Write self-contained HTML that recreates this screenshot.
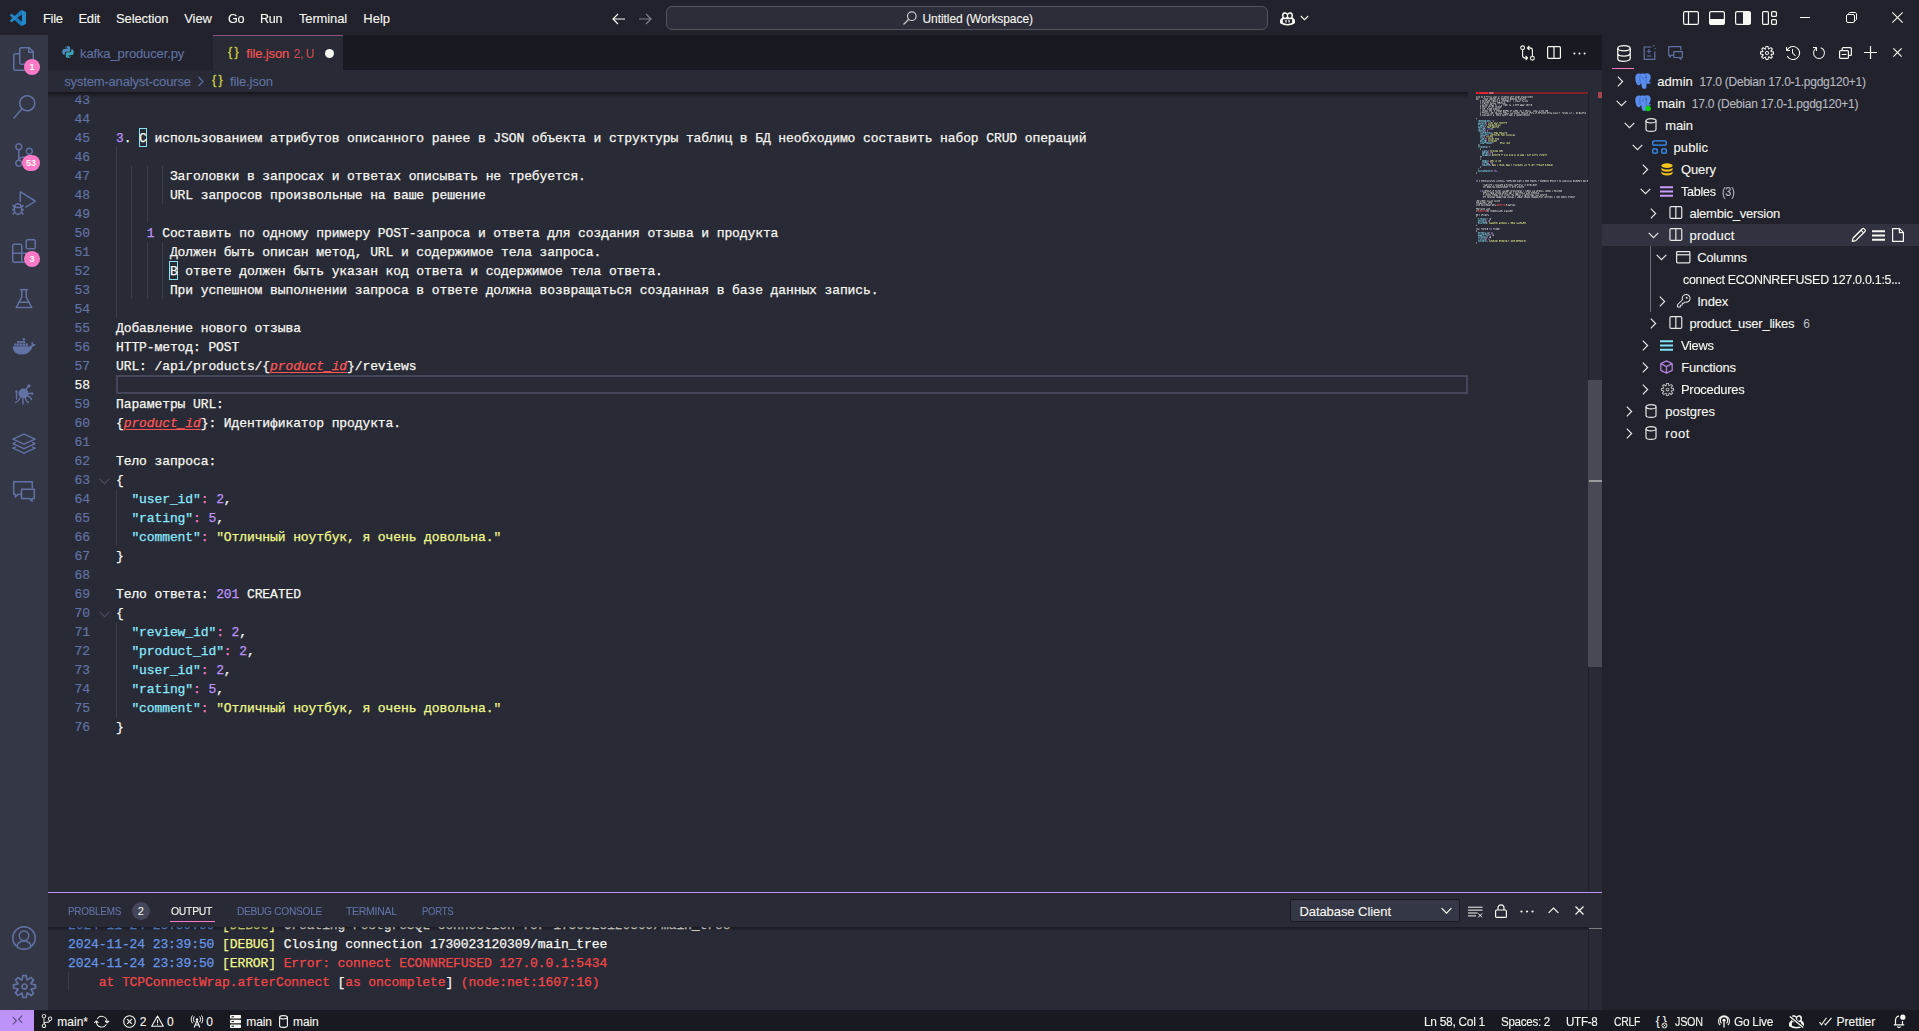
<!DOCTYPE html>
<html lang="en"><head><meta charset="utf-8"><title>file.json - Untitled (Workspace) - Visual Studio Code</title>
<style>
html,body{margin:0;padding:0;}
body{width:1919px;height:1031px;overflow:hidden;background:#282a36;position:relative;font-family:"Liberation Sans",sans-serif;font-size:13px;color:#f8f8f2;}
*{box-sizing:border-box;}
.abs{position:absolute;}
svg{display:block;position:absolute;overflow:visible;}
.t{position:absolute;white-space:pre;line-height:1;-webkit-text-stroke:0.1px;}
/* title bar */
#titlebar{position:absolute;left:0;top:0;width:1919px;height:35px;background:#21222c;}
#titlebar .m{position:absolute;top:0;height:35px;line-height:35px;font-size:13px;color:#f8f8f2;white-space:pre;}
#cmd{position:absolute;left:666px;top:6px;width:602px;height:24px;border:1px solid #54555d;border-radius:6px;background:#2c2d38;}
/* activity bar */
#activity{position:absolute;left:0;top:35px;width:48px;height:975px;background:#343746;}
.badge{position:absolute;width:16px;height:16px;border-radius:8px;background:#ff79c6;color:#f8f8f2;font-size:9px;font-weight:bold;text-align:center;line-height:16px;}
/* tabs */
#tabs{position:absolute;left:48px;top:35px;width:1554px;height:35px;background:#191a21;}
#crumbs{position:absolute;left:48px;top:70px;width:1554px;height:22px;background:#282a36;color:#6272a4;font-size:13px;}
/* editor */
#editor{position:absolute;left:48px;top:92px;width:1554px;height:800px;background:#282a36;overflow:hidden;}
.mono{font-family:"Liberation Mono","DejaVu Sans Mono",monospace;}
.ln{-webkit-text-stroke:0.2px;position:absolute;left:0;width:42px;text-align:right;height:19px;line-height:19px;color:#6272a4;font-size:13px;letter-spacing:-0.1px;font-family:"Liberation Mono",monospace;}
.cl{-webkit-text-stroke:0.25px;position:absolute;left:68px;height:19px;line-height:19px;white-space:pre;color:#f8f8f2;font-size:13px;letter-spacing:-0.1px;font-family:"Liberation Mono",monospace;}
.k{color:#8be9fd;} .s{color:#f1fa8c;} .n{color:#bd93f9;} .p{color:#ff79c6;} .q{color:#e9f284;} .kq{color:#8be9fd;}
.err{color:#ff5555;font-style:italic;text-decoration:underline;text-decoration-color:#ff5555;text-underline-offset:2px;text-decoration-thickness:1px;}
.guide{position:absolute;width:1px;background:#3b3d4d;}
/* panel */
#panel{position:absolute;left:48px;top:892px;width:1554px;height:118px;background:#282a36;border-top:1px solid #bd93f9;overflow:hidden;}
.pt{position:absolute;top:0;height:38px;line-height:38px;font-size:11px;color:#6272a4;white-space:pre;}
.ol{-webkit-text-stroke:0.25px;position:absolute;left:20px;height:19px;line-height:19px;white-space:pre;font-size:13px;letter-spacing:-0.1px;font-family:"Liberation Mono",monospace;color:#f8f8f2;}
/* sidebar */
#sidebar{position:absolute;left:1602px;top:35px;width:317px;height:975px;background:#21222c;}
.row{position:absolute;left:0;width:317px;height:22px;line-height:22px;font-size:13px;color:#f8f8f2;white-space:pre;}
.row .lbl{position:absolute;top:0;}
.row .desc{color:#b0b1b8;font-size:12px;}
/* status */
#status{position:absolute;left:0;top:1010px;width:1919px;height:22px;background:#191a21;color:#f8f8f2;font-size:12px;}
#status .s{position:absolute;top:0;height:22px;line-height:22px;white-space:pre;color:#f8f8f2;}

</style></head>
<body>
<div id="titlebar">
<svg style="left:10px;top:10px;" width="16" height="16" viewBox="0 0 100 100"><path fill="#2489ca" d="M96.5 10.8L75.9.9c-2.4-1.2-5.2-.7-7.1 1.2L29.4 38 12.2 25c-1.6-1.2-3.800-1.100-5.300.2L1.400 30.200c-1.800 1.700-1.800 4.500 0 6.200L16.300 50 1.400 63.600c-1.800 1.700-1.800 4.500 0 6.200l5.500 5c1.500 1.300 3.700 1.400 5.300.2L29.400 62l39.400 35.900c1.900 1.900 4.700 2.400 7.100 1.200l20.600-9.900c2.100-1 3.500-3.200 3.500-5.600V16.400c0-2.400-1.400-4.600-3.500-5.600zM75 72.700L45.100 50 75 27.300z"/><path fill="#1070b3" d="M75 .9c-2.400-1.200-5.200-.7-7.100 1.200L29.400 38l15.700 12L75 27.300v45.400L45.100 50 29.400 62l38.500 35.900c1.900 1.900 4.700 2.400 7.100 1.200z" opacity=".55"/></svg>
<span class="t" style="left:42.9px;top:9px;font-size:13px;line-height:19px;color:#f8f8f2;letter-spacing:-0.282px;">File</span>
<span class="t" style="left:78.4px;top:9px;font-size:13px;line-height:19px;color:#f8f8f2;letter-spacing:-0.200px;">Edit</span>
<span class="t" style="left:116px;top:9px;font-size:13px;line-height:19px;color:#f8f8f2;letter-spacing:-0.122px;">Selection</span>
<span class="t" style="left:184.3px;top:9px;font-size:13px;line-height:19px;color:#f8f8f2;letter-spacing:-0.114px;">View</span>
<span class="t" style="left:227.6px;top:9px;font-size:13px;line-height:19px;color:#f8f8f2;letter-spacing:-0.300px;transform:scaleX(0.9799);transform-origin:0 50%;">Go</span>
<span class="t" style="left:260.4px;top:9px;font-size:13px;line-height:19px;color:#f8f8f2;letter-spacing:-0.300px;transform:scaleX(0.9635);transform-origin:0 50%;">Run</span>
<span class="t" style="left:299px;top:9px;font-size:13px;line-height:19px;color:#f8f8f2;letter-spacing:-0.146px;">Terminal</span>
<span class="t" style="left:363.3px;top:9px;font-size:13px;line-height:19px;color:#f8f8f2;letter-spacing:-0.012px;">Help</span>
<svg style="left:611px;top:11px;" width="16" height="16" viewBox="0 0 16 16"><path d="M14 8H2.500M7 3L2 8l5 5" fill="none" stroke="#f8f8f2" stroke-width="1.200"/></svg>
<svg style="left:637px;top:11px;" width="16" height="16" viewBox="0 0 16 16"><path d="M2 8h11.500M9 3l5 5-5 5" fill="none" stroke="#7f808a" stroke-width="1.200"/></svg>
<div id="cmd"></div>
<svg style="left:902px;top:10px;" width="16" height="16" viewBox="0 0 16 16"><circle cx="9.800" cy="6.200" r="4.300" fill="none" stroke="#c8c8c8" stroke-width="1.200"/><path d="M6.800 9.200L1.500 14.500" stroke="#c8c8c8" stroke-width="1.300"/></svg>
<span class="t" style="left:922.5px;top:10px;font-size:12px;line-height:18px;color:#f8f8f2;letter-spacing:-0.069px;">Untitled (Workspace)</span>
<svg style="left:1280px;top:12px;" width="15" height="13.6" viewBox="0 0 15 13.600"><path fill="#f8f8f2" fill-rule="evenodd" d="M7.500 1.600C6.600.500 5.300 0 4.300.200 2.800.400 2 1.600 2 3.200c0 .8.100 1.500.4 2L.6 7.200C.2 7.700 0 8.200 0 8.800v1.600c0 .5.200.9.600 1.200 1.800 1.300 4.300 2 6.900 2s5.100-.7 6.900-2c.4-.3.600-.7.600-1.200V8.800c0-.6-.2-1.100-.6-1.600L12.600 5.200c.3-.5.400-1.200.4-2 0-1.600-.8-2.800-2.300-3-1-.2-2.300.3-3.200 1.400zM5.200 1.700c-1 0-1.700.8-1.700 2s.7 2 1.700 2 1.700-.8 1.700-2-.7-2-1.700-2zM9.800 1.700c-1 0-1.700.8-1.700 2s.7 2 1.700 2 1.700-.8 1.700-2-.7-2-1.700-2zM2.900 7.300h9.200v3.500c-1.300.7-2.900 1.100-4.600 1.100s-3.300-.4-4.600-1.100z"/><rect x="5.300" y="8" width="1.300" height="2.400" rx=".5" fill="#f8f8f2"/><rect x="8.400" y="8" width="1.300" height="2.400" rx=".5" fill="#f8f8f2"/></svg>
<svg style="left:1300px;top:14px;" width="9" height="8" viewBox="0 0 9 8"><path d="M.8 2l3.700 3.700L8.200 2" fill="none" stroke="#f8f8f2" stroke-width="1.100"/></svg>
<svg style="left:1683px;top:11px;" width="16" height="14" viewBox="0 0 16 14"><rect x=".6" y=".6" width="14.800" height="12.800" rx="1.500" fill="none" stroke="#f8f8f2" stroke-width="1.200"/><path d="M5.500 .6v12.800" stroke="#f8f8f2" stroke-width="1.200"/></svg>
<svg style="left:1709px;top:11px;" width="16" height="14" viewBox="0 0 16 14"><rect x=".6" y=".6" width="14.800" height="12.800" rx="1.500" fill="none" stroke="#f8f8f2" stroke-width="1.200"/><rect x="1" y="8" width="14" height="5.500" fill="#f8f8f2"/></svg>
<svg style="left:1735px;top:11px;" width="16" height="14" viewBox="0 0 16 14"><rect x=".6" y=".6" width="14.800" height="12.800" rx="1.500" fill="none" stroke="#f8f8f2" stroke-width="1.200"/><rect x="8" y="1" width="7.500" height="12" fill="#f8f8f2"/></svg>
<svg style="left:1762px;top:11px;" width="15" height="14" viewBox="0 0 15 14"><rect x=".6" y=".6" width="5.800" height="12.800" rx="1" fill="none" stroke="#f8f8f2" stroke-width="1.200"/><rect x="9.600" y=".6" width="4.800" height="4.800" rx="1" fill="none" stroke="#f8f8f2" stroke-width="1.200"/><rect x="9.600" y="8.600" width="4.800" height="4.800" rx="1" fill="none" stroke="#f8f8f2" stroke-width="1.200"/></svg>
<div class="abs" style="left:1800px;top:17px;width:10px;height:1px;background:#f8f8f2"></div>
<svg style="left:1846px;top:12px;" width="11" height="11" viewBox="0 0 11 11"><rect x=".5" y="2.500" width="8" height="8" rx="1.500" fill="none" stroke="#f8f8f2" stroke-width="1"/><path d="M2.500 2.500V2c0-.8.700-1.500 1.500-1.500h5c.8 0 1.500.7 1.500 1.500v5c0 .8-.7 1.500-1.500 1.500h-.5" fill="none" stroke="#f8f8f2" stroke-width="1"/></svg>
<svg style="left:1892px;top:12px;" width="11" height="11" viewBox="0 0 11 11"><path d="M.3.3l10.400 10.400M10.700.3L.3 10.700" stroke="#f8f8f2" stroke-width="1.100"/></svg>
</div>
<div id="activity">
<svg style="left:12px;top:12px;" width="24" height="24" viewBox="0 0 24 24"><path fill="#6272a4" d="M17.500 0h-9L7 1.500V6H2.500L1 7.500v15.070L2.500 24h12.070L16 22.570V18h4.700l1.300-1.430V4.500L17.500 0zm0 2.120l2.380 2.380H17.500V2.120zm-3 20.380h-12v-15H7v9.070L8.500 18h6v4.500zm6-6h-12v-15H16V6h4.500v10.500z"/></svg>
<svg style="left:12px;top:60px;" width="24" height="24" viewBox="0 0 24 24"><path fill="#6272a4" d="M15.250 0a8.250 8.250 0 0 0-6.180 13.720L1 22.880l1.120 1 8.050-9.120A8.251 8.251 0 1 0 15.250.01V0zm0 15a6.750 6.750 0 1 1 0-13.500 6.750 6.750 0 0 1 0 13.500z"/></svg>
<svg style="left:12px;top:108px;" width="24" height="24" viewBox="0 0 24 24"><path fill="#6272a4" d="M21.007 8.222A3.738 3.738 0 0 0 15.045 5.200a3.737 3.737 0 0 0 1.156 6.583 2.988 2.988 0 0 1-2.668 1.670h-2.990a4.456 4.456 0 0 0-2.989 1.165V7.400a3.737 3.737 0 1 0-1.494 0v9.117a3.776 3.776 0 1 0 1.816.099 2.990 2.990 0 0 1 2.668-1.667h2.990a4.484 4.484 0 0 0 4.223-3.039 3.736 3.736 0 0 0 3.250-3.687zM4.565 3.738a2.242 2.242 0 1 1 4.484 0 2.242 2.242 0 0 1-4.484 0zm4.484 16.441a2.242 2.242 0 1 1-4.484 0 2.242 2.242 0 0 1 4.484 0zm8.221-9.715a2.242 2.242 0 1 1 0-4.485 2.242 2.242 0 0 1 0 4.485z"/></svg>
<svg style="left:12px;top:156px;" width="24" height="24" viewBox="0 0 24 24"><path fill="#6272a4" d="M10.940 13.500l-1.320 1.320a3.730 3.730 0 0 0-7.240 0L1.060 13.500 0 14.560l1.720 1.720-.22.22V18H0v1.500h1.500v.080c.077.489.214.966.410 1.420L0 22.940 1.060 24l1.650-1.650A4.308 4.308 0 0 0 6 24a4.310 4.310 0 0 0 3.290-1.650L10.940 24 12 22.940 10.090 21c.198-.464.336-.951.410-1.450v-.1H12V18h-1.500v-1.500l-.22-.22L12 14.560l-1.060-1.060zM6 13.500a2.250 2.250 0 0 1 2.250 2.250h-4.500A2.250 2.250 0 0 1 6 13.500zm3 6a3.330 3.330 0 0 1-3 3 3.330 3.330 0 0 1-3-3v-2.250h6v2.250zm14.760-9.900v1.260L13.500 17.370V15.600l8.500-5.370L9 2v9.460a5.070 5.070 0 0 0-1.500-.72V.630L8.640 0l15.120 9.600z"/></svg>
<svg style="left:12px;top:204px;" width="24" height="24" viewBox="0 0 24 24"><path fill="#6272a4" d="M13.500 1.500L15 0h7.500L24 1.500V9l-1.500 1.500H15L13.500 9V1.500zm1.500 0V9h7.500V1.500H15zM0 15V6l1.500-1.500H9L10.500 6v7.500H18l1.500 1.500v7.500L18 24H1.500L0 22.500V15zm9-1.500V6H1.500v7.500H9zM9 15H1.500v7.500H9V15zm1.500 7.500H18V15h-7.500v7.500z"/></svg>
<svg style="left:12px;top:252px;" width="24" height="24" viewBox="0 0 24 24"><path fill="none" stroke="#6272a4" stroke-width="1.500" stroke-linejoin="round" d="M8 2.800h8M9.800 2.800v7.200L4.200 20.600h15.600L14.200 10V2.800M7 15.200h10"/></svg>
<svg style="left:12px;top:300px;" width="24" height="24" viewBox="0 0 24 24"><path fill="#6272a4" d="M.6 11.200h17.200c.9-.1 1.500-.6 1.900-1.600-.5-1-.4-2 .3-2.900.9.600 1.300 1.400 1.300 2.400 1-.3 1.900-.1 2.500.500-.6 1.200-1.700 1.800-3.200 1.800C18.800 16.500 15.200 19.500 9.600 19.500 4.200 19.500.9 16.700.6 11.200z"/><path fill="#6272a4" d="M2.300 8.500h2.400v2.200H2.300zM5.100 8.500h2.400v2.200H5.100zM7.900 8.500h2.400v2.200H7.900zM10.700 8.500h2.400v2.200h-2.400zM13.500 8.500h2.400v2.200h-2.400zM5.100 5.900h2.400v2.200H5.100zM7.900 5.900h2.400v2.200H7.900zM10.700 5.900h2.400v2.200h-2.400zM10.700 3.300h2.400v2.200h-2.400z"/></svg>
<svg style="left:12px;top:348px;" width="24" height="24" viewBox="0 0 24 24"><circle cx="11.500" cy="10.500" r="5" fill="#6272a4"/><path fill="none" stroke="#6272a4" stroke-width="1.400" stroke-linecap="round" d="M14 6.500l2.500-3.500M4.500 9v7M8 15c-1 2-2 4-4.500 4.500M11 16v5M13.500 15.500c.5 2 1.500 3.500 3 4M16 13c1.500.5 3 1.500 3.500 3.500M15.500 10.500h3"/><circle cx="17" cy="2.800" r="1.600" fill="#6272a4"/><circle cx="4.500" cy="8.500" r="1.300" fill="#6272a4"/><circle cx="20" cy="10.500" r="1.300" fill="#6272a4"/></svg>
<svg style="left:12px;top:396px;" width="24" height="24" viewBox="0 0 24 24"><path fill="none" stroke="#6272a4" stroke-width="1.400" stroke-linejoin="round" d="M12 3.200L.9 8.200 12 13.200l11.100-5zM3.800 11.400L.9 12.700 12 17.700l11.100-5-2.900-1.300M3.800 15.900L.9 17.200 12 22.200l11.100-5-2.900-1.300"/></svg>
<svg style="left:12px;top:444px;" width="24" height="24" viewBox="0 0 24 24"><path fill="none" stroke="#6272a4" stroke-width="1.500" stroke-linejoin="round" d="M9.500 15.200H6.200L3.400 18v-2.800H1.700V2.800h18.600v6.400M9.500 10.200h12.800v9.200h-2.200v2.800l-2.800-2.800H9.500z"/></svg>
<div class="badge" style="left:24px;top:24px;">1</div>
<div class="badge" style="left:22px;top:120px;width:18px;">53</div>
<div class="badge" style="left:24px;top:216px;">3</div>
<svg style="left:12px;top:891px;" width="24" height="24" viewBox="0 0 24 24"><circle cx="12" cy="12" r="11.200" fill="none" stroke="#6272a4" stroke-width="1.500"/><circle cx="12" cy="9.700" r="4.700" fill="none" stroke="#6272a4" stroke-width="1.500"/><path d="M4.800 20.300c1-3.600 3.900-5.300 7.200-5.300s6.200 1.700 7.200 5.300" fill="none" stroke="#6272a4" stroke-width="1.500"/></svg>
<svg style="left:10.5px;top:937.5px;" width="27" height="27" viewBox="0 0 16 16"><path fill="#6272a4" d="M9.100 4.400L8.600 2H7.400l-.5 2.400-.7.300-2-1.300-.9.800 1.300 2-.2.700-2.400.5v1.200l2.400.5.300.8-1.300 2 .8.800 2-1.300.8.300.4 2.300h1.200l.5-2.400.8-.3 2 1.300.8-.8-1.300-2 .3-.8 2.300-.4V7.400l-2.400-.5-.3-.8 1.300-2-.8-.8-2 1.300-.7-.2zM9.400 1l.5 2.400L12 2.100l2 2-1.400 2.100 2.400.4v2.800l-2.400.5L14 12l-2 2-2.100-1.400-.5 2.400H6.600l-.5-2.400L4 13.900l-2-2 1.400-2.100L1 9.400V6.600l2.400-.5L2.100 4l2-2 2.100 1.400.4-2.400h2.800zm.6 7c0 1.100-.9 2-2 2s-2-.9-2-2 .9-2 2-2 2 .9 2 2zM8 9c.6 0 1-.4 1-1s-.4-1-1-1-1 .4-1 1 .4 1 1 1z"/></svg>
</div>
<div id="tabs">
<div class="abs" style="left:0;top:0;width:165px;height:35px;background:#21222c"></div>
<div class="abs" style="left:165px;top:0;width:130px;height:35px;background:#282a36;border-top:1px solid #8f4f80"></div>
<svg style="left:14px;top:11px;" width="12" height="12" viewBox="0 0 12 12"><path fill="#4b8bbe" d="M5.900.2C3.300.2 3.500 1.300 3.500 1.300v1.200h2.500v.4H2.100S.3 2.700.3 5.800s1.500 3 1.500 3h1V7.300s0-1.500 1.500-1.500h2.500s1.400 0 1.400-1.400V1.800S8.400.2 5.900.2z"/><path fill="#3a9fb3" d="M6.100 11.800c2.600 0 2.400-1.100 2.400-1.100V9.500H6v-.4h3.900s1.800.2 1.800-2.900-1.500-3-1.500-3h-1v1.500s0 1.500-1.500 1.500H5.200s-1.400 0-1.400 1.400v2.600s-.2 1.600 2.300 1.600z"/><circle cx="4.600" cy="1.600" r=".5" fill="#21222c"/><circle cx="7.400" cy="10.400" r=".5" fill="#21222c"/></svg>
<span class="t" style="left:32px;top:9px;font-size:13px;line-height:19px;color:#6272a4;letter-spacing:-0.121px;">kafka_producer.py</span>
<span class="t" style="left:180px;top:8.05px;font-size:12.5px;line-height:18.5px;color:#cbcb41;letter-spacing:2.450px;-webkit-text-stroke:0.35px #cbcb41;">{}</span>
<span class="t" style="left:198.3px;top:9px;font-size:13px;line-height:19px;color:#ff5555;letter-spacing:-0.147px;">file.json</span>
<span class="t" style="left:246.2px;top:9.5px;font-size:12px;line-height:18px;color:#d44a50;letter-spacing:-0.300px;transform:scaleX(0.9712);transform-origin:0 50%;">2, U</span>
<div class="abs" style="left:276.500px;top:13.500px;width:9px;height:9px;border-radius:5px;background:#f8f8f2"></div>
<svg style="left:1472px;top:10px;" width="15" height="16" viewBox="0 0 15 16"><circle cx="2.600" cy="2.800" r="1.900" fill="none" stroke="#f8f8f2" stroke-width="1.100"/><circle cx="12.400" cy="13.200" r="1.900" fill="none" stroke="#f8f8f2" stroke-width="1.100"/><path d="M2.600 4.700v5.800c0 1.600 1 2.600 2.600 2.600h2.300M5.600 11l2 2.100-2 2.100M12.400 11.300V5.500c0-1.600-1-2.600-2.600-2.600H7.500M9.400 5L7.400 2.900l2-2.100" fill="none" stroke="#f8f8f2" stroke-width="1.100"/></svg>
<svg style="left:1499px;top:11px;" width="14" height="13" viewBox="0 0 14 13"><rect x=".6" y=".6" width="12.800" height="11.800" rx="1" fill="none" stroke="#f8f8f2" stroke-width="1.200"/><path d="M7 .6v11.800" stroke="#f8f8f2" stroke-width="1.200"/></svg>
<svg style="left:1524.5px;top:16.5px;" width="13" height="3" viewBox="0 0 14 3"><circle cx="1.500" cy="1.500" r="1.100" fill="#f8f8f2"/><circle cx="7" cy="1.500" r="1.100" fill="#f8f8f2"/><circle cx="12.500" cy="1.500" r="1.100" fill="#f8f8f2"/></svg>
</div>
<div id="crumbs">
<span class="t" style="left:16.2px;top:2px;font-size:13px;line-height:19px;color:#6272a4;letter-spacing:-0.162px;">system-analyst-course</span>
<svg style="left:148.5px;top:6px;" width="8" height="11" viewBox="0 0 8 11"><path d="M1.500 1l4.500 4.500L1.500 10" fill="none" stroke="#6272a4" stroke-width="1.100"/></svg>
<span class="t" style="left:164px;top:1.05px;font-size:12.5px;line-height:18.5px;color:#cbcb41;letter-spacing:2.450px;-webkit-text-stroke:0.35px #cbcb41;">{}</span>
<span class="t" style="left:182px;top:2px;font-size:13px;line-height:19px;color:#6272a4;letter-spacing:-0.135px;">file.json</span>
</div>
<div id="editor">
<div class="abs" style="left:68px;top:283px;width:1352px;height:19px;border:2px solid #44475a;"></div>
<div class="guide" style="left:68px;top:55px;height:171px"></div>
<div class="guide" style="left:83px;top:74px;height:133px"></div>
<div class="guide" style="left:99px;top:74px;height:57px"></div>
<div class="guide" style="left:99px;top:150px;height:57px"></div>
<div class="guide" style="left:114px;top:74px;height:38px"></div>
<div class="guide" style="left:114px;top:150px;height:57px"></div>
<div class="guide" style="left:68px;top:397px;height:57px"></div>
<div class="guide" style="left:68px;top:530px;height:95px"></div>
<div class="abs" style="left:90.6px;top:36px;width:8.700px;height:19px;border:1px solid #86e3f7;"></div>
<div class="abs" style="left:121.4px;top:169px;width:8.700px;height:19px;border:1px solid #86e3f7;"></div>
<div class="ln" style="top:-1px;">43</div>
<div class="ln" style="top:18px;">44</div>
<div class="ln" style="top:37px;">45</div>
<div class="cl" style="top:37px"><span class="n">3</span>. С использованием атрибутов описанного ранее в JSON объекта и структуры таблиц в БД необходимо составить набор CRUD операций</div>
<div class="ln" style="top:56px;">46</div>
<div class="ln" style="top:75px;">47</div>
<div class="cl" style="top:75px">       Заголовки в запросах и ответах описывать не требуется.</div>
<div class="ln" style="top:94px;">48</div>
<div class="cl" style="top:94px">       URL запросов произвольные на ваше решение</div>
<div class="ln" style="top:113px;">49</div>
<div class="ln" style="top:132px;">50</div>
<div class="cl" style="top:132px">    <span class="n">1</span> Составить по одному примеру POST-запроса и ответа для создания отзыва и продукта</div>
<div class="ln" style="top:151px;">51</div>
<div class="cl" style="top:151px">       Должен быть описан метод, URL и содержимое тела запроса.</div>
<div class="ln" style="top:170px;">52</div>
<div class="cl" style="top:170px">       В ответе должен быть указан код ответа и содержимое тела ответа.</div>
<div class="ln" style="top:189px;">53</div>
<div class="cl" style="top:189px">       При успешном выполнении запроса в ответе должна возвращаться созданная в базе данных запись.</div>
<div class="ln" style="top:208px;">54</div>
<div class="ln" style="top:227px;">55</div>
<div class="cl" style="top:227px">Добавление нового отзыва</div>
<div class="ln" style="top:246px;">56</div>
<div class="cl" style="top:246px">HTTP-метод: POST</div>
<div class="ln" style="top:265px;">57</div>
<div class="cl" style="top:265px">URL: /api/products/{<span class="err">product_id</span>}/reviews</div>
<div class="ln" style="top:284px;color:#f8f8f2;">58</div>
<div class="ln" style="top:303px;">59</div>
<div class="cl" style="top:303px">Параметры URL:</div>
<div class="ln" style="top:322px;">60</div>
<div class="cl" style="top:322px">{<span class="err">product_id</span>}: Идентификатор продукта.</div>
<div class="ln" style="top:341px;">61</div>
<div class="ln" style="top:360px;">62</div>
<div class="cl" style="top:360px">Тело запроса:</div>
<div class="ln" style="top:379px;">63</div>
<div class="cl" style="top:379px">{</div>
<div class="ln" style="top:398px;">64</div>
<div class="cl" style="top:398px">  <span class="kq">&quot;</span><span class="k">user_id</span><span class="kq">&quot;</span><span class="p">:</span> <span class="n">2</span>,</div>
<div class="ln" style="top:417px;">65</div>
<div class="cl" style="top:417px">  <span class="kq">&quot;</span><span class="k">rating</span><span class="kq">&quot;</span><span class="p">:</span> <span class="n">5</span>,</div>
<div class="ln" style="top:436px;">66</div>
<div class="cl" style="top:436px">  <span class="kq">&quot;</span><span class="k">comment</span><span class="kq">&quot;</span><span class="p">:</span> <span class="q">&quot;</span><span class="s">Отличный ноутбук, я очень довольна.</span><span class="q">&quot;</span></div>
<div class="ln" style="top:455px;">67</div>
<div class="cl" style="top:455px">}</div>
<div class="ln" style="top:474px;">68</div>
<div class="ln" style="top:493px;">69</div>
<div class="cl" style="top:493px">Тело ответа: <span class="n">201</span> CREATED</div>
<div class="ln" style="top:512px;">70</div>
<div class="cl" style="top:512px">{</div>
<div class="ln" style="top:531px;">71</div>
<div class="cl" style="top:531px">  <span class="kq">&quot;</span><span class="k">review_id</span><span class="kq">&quot;</span><span class="p">:</span> <span class="n">2</span>,</div>
<div class="ln" style="top:550px;">72</div>
<div class="cl" style="top:550px">  <span class="kq">&quot;</span><span class="k">product_id</span><span class="kq">&quot;</span><span class="p">:</span> <span class="n">2</span>,</div>
<div class="ln" style="top:569px;">73</div>
<div class="cl" style="top:569px">  <span class="kq">&quot;</span><span class="k">user_id</span><span class="kq">&quot;</span><span class="p">:</span> <span class="n">2</span>,</div>
<div class="ln" style="top:588px;">74</div>
<div class="cl" style="top:588px">  <span class="kq">&quot;</span><span class="k">rating</span><span class="kq">&quot;</span><span class="p">:</span> <span class="n">5</span>,</div>
<div class="ln" style="top:607px;">75</div>
<div class="cl" style="top:607px">  <span class="kq">&quot;</span><span class="k">comment</span><span class="kq">&quot;</span><span class="p">:</span> <span class="q">&quot;</span><span class="s">Отличный ноутбук, я очень довольна.</span><span class="q">&quot;</span></div>
<div class="ln" style="top:626px;">76</div>
<div class="cl" style="top:626px">}</div>
<svg style="left:51px;top:386px;" width="11" height="7" viewBox="0 0 11 7"><path d="M.7.800l4.800 4.800L10.300.8" fill="none" stroke="#4a4d62" stroke-width="1.100"/></svg>
<svg style="left:51px;top:519px;" width="11" height="7" viewBox="0 0 11 7"><path d="M.7.800l4.800 4.800L10.300.8" fill="none" stroke="#4a4d62" stroke-width="1.100"/></svg>
<div class="abs" style="left:0;top:0;width:1420px;height:6px;background:linear-gradient(#15161c,rgba(21,22,28,0))"></div>
<svg style="left:1428px;top:0px" width="112" height="154" viewBox="0 0 112 154"><defs><filter id="mmf" x="0" y="0" width="100%" height="100%" color-interpolation-filters="sRGB"><feTurbulence type="fractalNoise" baseFrequency="0.85 0.6" numOctaves="2" seed="7" result="n"/><feColorMatrix in="n" type="matrix" values="0 0 0 0 0 0 0 0 0 0 0 0 0 0 0 1.7 0 0 0 -0.3" result="a"/><feComposite in="SourceGraphic" in2="a" operator="in"/></filter></defs><rect x="0" y="0" width="112" height="2" fill="#80212a"/><rect x="0" y="0" width="2" height="2" fill="#ff1c1c"/><rect x="3" y="0" width="9" height="2" fill="#e8222e"/><rect x="13" y="0" width="4.500" height="2" fill="#c9656a"/><g filter="url(#mmf)"><rect x="0" y="4" width="4" height="2" fill="#f8f8f2" opacity="0.62"/><rect x="5" y="4" width="2" height="2" fill="#f8f8f2" opacity="0.62"/><rect x="8" y="4" width="1" height="2" fill="#f8f8f2" opacity="0.62"/><rect x="10" y="4" width="6" height="2" fill="#f8f8f2" opacity="0.62"/><rect x="17" y="4" width="4" height="2" fill="#f8f8f2" opacity="0.62"/><rect x="22" y="4" width="2" height="2" fill="#f8f8f2" opacity="0.62"/><rect x="25" y="4" width="8" height="2" fill="#f8f8f2" opacity="0.62"/><rect x="34" y="4" width="4" height="2" fill="#f8f8f2" opacity="0.62"/><rect x="39" y="4" width="5" height="2" fill="#f8f8f2" opacity="0.62"/><rect x="45" y="4" width="12" height="2" fill="#f8f8f2" opacity="0.62"/><rect x="0" y="6" width="3" height="2" fill="#f8f8f2" opacity="0.62"/><rect x="7" y="6" width="5" height="2" fill="#f8f8f2" opacity="0.62"/><rect x="13" y="6" width="7" height="2" fill="#f8f8f2" opacity="0.62"/><rect x="21" y="6" width="3" height="2" fill="#f8f8f2" opacity="0.62"/><rect x="25" y="6" width="8" height="2" fill="#f8f8f2" opacity="0.62"/><rect x="34" y="6" width="7" height="2" fill="#f8f8f2" opacity="0.62"/><rect x="42" y="6" width="8" height="2" fill="#f8f8f2" opacity="0.62"/><rect x="4" y="8" width="1" height="2" fill="#f8f8f2" opacity="0.62"/><rect x="6" y="8" width="8" height="2" fill="#f8f8f2" opacity="0.62"/><rect x="15" y="8" width="7" height="2" fill="#f8f8f2" opacity="0.62"/><rect x="23" y="8" width="1" height="2" fill="#f8f8f2" opacity="0.62"/><rect x="25" y="8" width="10" height="2" fill="#f8f8f2" opacity="0.62"/><rect x="37" y="8" width="1" height="2" fill="#f8f8f2" opacity="0.62"/><rect x="39" y="8" width="6" height="2" fill="#f8f8f2" opacity="0.62"/><rect x="46" y="8" width="6" height="2" fill="#f8f8f2" opacity="0.62"/><rect x="4" y="10" width="1" height="2" fill="#f8f8f2" opacity="0.62"/><rect x="6" y="10" width="7" height="2" fill="#f8f8f2" opacity="0.62"/><rect x="14" y="10" width="6" height="2" fill="#f8f8f2" opacity="0.62"/><rect x="21" y="10" width="9" height="2" fill="#f8f8f2" opacity="0.62"/><rect x="4" y="12" width="1" height="2" fill="#f8f8f2" opacity="0.62"/><rect x="6" y="12" width="6" height="2" fill="#f8f8f2" opacity="0.62"/><rect x="13" y="12" width="5" height="2" fill="#f8f8f2" opacity="0.62"/><rect x="19" y="12" width="2" height="2" fill="#f8f8f2" opacity="0.62"/><rect x="23" y="12" width="1" height="2" fill="#f8f8f2" opacity="0.62"/><rect x="25" y="12" width="1" height="2" fill="#f8f8f2" opacity="0.62"/><rect x="27" y="12" width="5" height="2" fill="#f8f8f2" opacity="0.62"/><rect x="33" y="12" width="2" height="2" fill="#f8f8f2" opacity="0.62"/><rect x="37" y="12" width="1" height="2" fill="#f8f8f2" opacity="0.62"/><rect x="39" y="12" width="4" height="2" fill="#f8f8f2" opacity="0.62"/><rect x="44" y="12" width="5" height="2" fill="#f8f8f2" opacity="0.62"/><rect x="50" y="12" width="6" height="2" fill="#f8f8f2" opacity="0.62"/><rect x="4" y="14" width="1" height="2" fill="#f8f8f2" opacity="0.62"/><rect x="6" y="14" width="5" height="2" fill="#f8f8f2" opacity="0.62"/><rect x="12" y="14" width="6" height="2" fill="#f8f8f2" opacity="0.62"/><rect x="19" y="14" width="7" height="2" fill="#f8f8f2" opacity="0.62"/><rect x="4" y="16" width="1" height="2" fill="#f8f8f2" opacity="0.62"/><rect x="6" y="16" width="4" height="2" fill="#f8f8f2" opacity="0.62"/><rect x="11" y="16" width="5" height="2" fill="#f8f8f2" opacity="0.62"/><rect x="17" y="16" width="7" height="2" fill="#f8f8f2" opacity="0.62"/><rect x="4" y="18" width="1" height="2" fill="#f8f8f2" opacity="0.62"/><rect x="6" y="18" width="6" height="2" fill="#f8f8f2" opacity="0.62"/><rect x="13" y="18" width="3" height="2" fill="#f8f8f2" opacity="0.62"/><rect x="18" y="18" width="1" height="2" fill="#f8f8f2" opacity="0.62"/><rect x="20" y="18" width="6" height="2" fill="#f8f8f2" opacity="0.62"/><rect x="27" y="18" width="6" height="2" fill="#f8f8f2" opacity="0.62"/><rect x="34" y="18" width="2" height="2" fill="#f8f8f2" opacity="0.62"/><rect x="37" y="18" width="5" height="2" fill="#f8f8f2" opacity="0.62"/><rect x="43" y="18" width="3" height="2" fill="#f8f8f2" opacity="0.62"/><rect x="47" y="18" width="1" height="2" fill="#f8f8f2" opacity="0.62"/><rect x="49" y="18" width="6" height="2" fill="#f8f8f2" opacity="0.62"/><rect x="57" y="18" width="5" height="2" fill="#f8f8f2" opacity="0.62"/><rect x="63" y="18" width="1" height="2" fill="#f8f8f2" opacity="0.62"/><rect x="65" y="18" width="3" height="2" fill="#f8f8f2" opacity="0.62"/><rect x="69" y="18" width="3" height="2" fill="#f8f8f2" opacity="0.62"/><rect x="4" y="20" width="1" height="2" fill="#f8f8f2" opacity="0.62"/><rect x="6" y="20" width="7" height="2" fill="#f8f8f2" opacity="0.62"/><rect x="14" y="20" width="4" height="2" fill="#f8f8f2" opacity="0.62"/><rect x="19" y="20" width="7" height="2" fill="#f8f8f2" opacity="0.62"/><rect x="27" y="20" width="6" height="2" fill="#f8f8f2" opacity="0.62"/><rect x="34" y="20" width="3" height="2" fill="#f8f8f2" opacity="0.62"/><rect x="38" y="20" width="6" height="2" fill="#f8f8f2" opacity="0.62"/><rect x="45" y="20" width="7" height="2" fill="#f8f8f2" opacity="0.62"/><rect x="53" y="20" width="5" height="2" fill="#f8f8f2" opacity="0.62"/><rect x="59" y="20" width="2" height="2" fill="#f8f8f2" opacity="0.62"/><rect x="62" y="20" width="8" height="2" fill="#f8f8f2" opacity="0.62"/><rect x="71" y="20" width="5" height="2" fill="#f8f8f2" opacity="0.62"/><rect x="77" y="20" width="5" height="2" fill="#f8f8f2" opacity="0.62"/><rect x="83" y="20" width="1" height="2" fill="#f8f8f2" opacity="0.62"/><rect x="86" y="20" width="6" height="2" fill="#f8f8f2" opacity="0.62"/><rect x="93" y="20" width="3" height="2" fill="#f8f8f2" opacity="0.62"/><rect x="97" y="20" width="1" height="2" fill="#f8f8f2" opacity="0.62"/><rect x="100" y="20" width="10" height="2" fill="#f8f8f2" opacity="0.62"/><rect x="4" y="22" width="1" height="2" fill="#f8f8f2" opacity="0.62"/><rect x="6" y="22" width="10" height="2" fill="#f8f8f2" opacity="0.62"/><rect x="17" y="22" width="1" height="2" fill="#f8f8f2" opacity="0.62"/><rect x="20" y="22" width="5" height="2" fill="#f8f8f2" opacity="0.62"/><rect x="26" y="22" width="6" height="2" fill="#f8f8f2" opacity="0.62"/><rect x="33" y="22" width="4" height="2" fill="#f8f8f2" opacity="0.62"/><rect x="38" y="22" width="1" height="2" fill="#f8f8f2" opacity="0.62"/><rect x="40" y="22" width="14" height="2" fill="#f8f8f2" opacity="0.62"/><rect x="0" y="26" width="1" height="2" fill="#f8f8f2" opacity="0.62"/><rect x="2" y="28" width="12" height="2" fill="#8be9fd" opacity="0.68"/><rect x="14" y="28" width="1" height="2" fill="#ff79c6" opacity="0.68"/><rect x="16" y="28" width="1" height="2" fill="#bd93f9" opacity="0.68"/><rect x="17" y="28" width="1" height="2" fill="#f8f8f2" opacity="0.62"/><rect x="2" y="30" width="8" height="2" fill="#8be9fd" opacity="0.68"/><rect x="10" y="30" width="1" height="2" fill="#ff79c6" opacity="0.68"/><rect x="12" y="30" width="5" height="2" fill="#f1fa8c" opacity="0.68"/><rect x="18" y="30" width="4" height="2" fill="#f1fa8c" opacity="0.68"/><rect x="23" y="30" width="7" height="2" fill="#f1fa8c" opacity="0.68"/><rect x="30" y="30" width="1" height="2" fill="#f8f8f2" opacity="0.62"/><rect x="2" y="32" width="8" height="2" fill="#8be9fd" opacity="0.68"/><rect x="10" y="32" width="1" height="2" fill="#ff79c6" opacity="0.68"/><rect x="12" y="32" width="12" height="2" fill="#f1fa8c" opacity="0.68"/><rect x="24" y="32" width="1" height="2" fill="#f8f8f2" opacity="0.62"/><rect x="2" y="34" width="7" height="2" fill="#8be9fd" opacity="0.68"/><rect x="9" y="34" width="1" height="2" fill="#ff79c6" opacity="0.68"/><rect x="11" y="34" width="11" height="2" fill="#f1fa8c" opacity="0.68"/><rect x="22" y="34" width="1" height="2" fill="#f8f8f2" opacity="0.62"/><rect x="2" y="36" width="7" height="2" fill="#8be9fd" opacity="0.68"/><rect x="9" y="36" width="1" height="2" fill="#ff79c6" opacity="0.68"/><rect x="11" y="36" width="5" height="2" fill="#bd93f9" opacity="0.68"/><rect x="16" y="36" width="1" height="2" fill="#f8f8f2" opacity="0.62"/><rect x="2" y="38" width="7" height="2" fill="#8be9fd" opacity="0.68"/><rect x="9" y="38" width="1" height="2" fill="#ff79c6" opacity="0.68"/><rect x="11" y="38" width="1" height="2" fill="#f8f8f2" opacity="0.62"/><rect x="4" y="40" width="12" height="2" fill="#8be9fd" opacity="0.68"/><rect x="16" y="40" width="1" height="2" fill="#ff79c6" opacity="0.68"/><rect x="18" y="40" width="4" height="2" fill="#f1fa8c" opacity="0.68"/><rect x="23" y="40" width="7" height="2" fill="#f1fa8c" opacity="0.68"/><rect x="30" y="40" width="1" height="2" fill="#f8f8f2" opacity="0.62"/><rect x="4" y="42" width="8" height="2" fill="#8be9fd" opacity="0.68"/><rect x="12" y="42" width="1" height="2" fill="#ff79c6" opacity="0.68"/><rect x="14" y="42" width="10" height="2" fill="#f1fa8c" opacity="0.68"/><rect x="25" y="42" width="4" height="2" fill="#f1fa8c" opacity="0.68"/><rect x="30" y="42" width="8" height="2" fill="#f1fa8c" opacity="0.68"/><rect x="38" y="42" width="1" height="2" fill="#f8f8f2" opacity="0.62"/><rect x="4" y="44" width="4" height="2" fill="#8be9fd" opacity="0.68"/><rect x="8" y="44" width="1" height="2" fill="#ff79c6" opacity="0.68"/><rect x="10" y="44" width="6" height="2" fill="#f1fa8c" opacity="0.68"/><rect x="16" y="44" width="1" height="2" fill="#f8f8f2" opacity="0.62"/><rect x="4" y="46" width="6" height="2" fill="#8be9fd" opacity="0.68"/><rect x="10" y="46" width="1" height="2" fill="#ff79c6" opacity="0.68"/><rect x="12" y="46" width="6" height="2" fill="#f1fa8c" opacity="0.68"/><rect x="19" y="46" width="3" height="2" fill="#f1fa8c" opacity="0.68"/><rect x="22" y="46" width="1" height="2" fill="#f8f8f2" opacity="0.62"/><rect x="4" y="48" width="6" height="2" fill="#8be9fd" opacity="0.68"/><rect x="10" y="48" width="1" height="2" fill="#ff79c6" opacity="0.68"/><rect x="12" y="48" width="8" height="2" fill="#f1fa8c" opacity="0.68"/><rect x="20" y="48" width="1" height="2" fill="#f8f8f2" opacity="0.62"/><rect x="4" y="50" width="13" height="2" fill="#8be9fd" opacity="0.68"/><rect x="17" y="50" width="1" height="2" fill="#ff79c6" opacity="0.68"/><rect x="24" y="50" width="5" height="2" fill="#f1fa8c" opacity="0.68"/><rect x="30" y="50" width="4" height="2" fill="#f1fa8c" opacity="0.68"/><rect x="2" y="52" width="2" height="2" fill="#f8f8f2" opacity="0.62"/><rect x="2" y="54" width="9" height="2" fill="#8be9fd" opacity="0.68"/><rect x="11" y="54" width="1" height="2" fill="#ff79c6" opacity="0.68"/><rect x="13" y="54" width="1" height="2" fill="#f8f8f2" opacity="0.62"/><rect x="4" y="56" width="1" height="2" fill="#f8f8f2" opacity="0.62"/><rect x="6" y="58" width="6" height="2" fill="#8be9fd" opacity="0.68"/><rect x="12" y="58" width="1" height="2" fill="#ff79c6" opacity="0.68"/><rect x="14" y="58" width="8" height="2" fill="#f1fa8c" opacity="0.68"/><rect x="23" y="58" width="3" height="2" fill="#f1fa8c" opacity="0.68"/><rect x="26" y="58" width="1" height="2" fill="#f8f8f2" opacity="0.62"/><rect x="6" y="60" width="6" height="2" fill="#8be9fd" opacity="0.68"/><rect x="12" y="60" width="1" height="2" fill="#ff79c6" opacity="0.68"/><rect x="14" y="60" width="2" height="2" fill="#bd93f9" opacity="0.68"/><rect x="16" y="60" width="1" height="2" fill="#f8f8f2" opacity="0.62"/><rect x="6" y="62" width="8" height="2" fill="#8be9fd" opacity="0.68"/><rect x="14" y="62" width="1" height="2" fill="#ff79c6" opacity="0.68"/><rect x="16" y="62" width="8" height="2" fill="#f1fa8c" opacity="0.68"/><rect x="25" y="62" width="2" height="2" fill="#f1fa8c" opacity="0.68"/><rect x="28" y="62" width="4" height="2" fill="#f1fa8c" opacity="0.68"/><rect x="33" y="62" width="4" height="2" fill="#f1fa8c" opacity="0.68"/><rect x="38" y="62" width="2" height="2" fill="#f1fa8c" opacity="0.68"/><rect x="41" y="62" width="2" height="2" fill="#f1fa8c" opacity="0.68"/><rect x="44" y="62" width="4" height="2" fill="#f1fa8c" opacity="0.68"/><rect x="49" y="62" width="1" height="2" fill="#f1fa8c" opacity="0.68"/><rect x="51" y="62" width="4" height="2" fill="#f1fa8c" opacity="0.68"/><rect x="56" y="62" width="6" height="2" fill="#f1fa8c" opacity="0.68"/><rect x="63" y="62" width="8" height="2" fill="#f1fa8c" opacity="0.68"/><rect x="4" y="64" width="2" height="2" fill="#f8f8f2" opacity="0.62"/><rect x="4" y="66" width="1" height="2" fill="#f8f8f2" opacity="0.62"/><rect x="6" y="68" width="6" height="2" fill="#8be9fd" opacity="0.68"/><rect x="12" y="68" width="1" height="2" fill="#ff79c6" opacity="0.68"/><rect x="14" y="68" width="4" height="2" fill="#f1fa8c" opacity="0.68"/><rect x="19" y="68" width="2" height="2" fill="#f1fa8c" opacity="0.68"/><rect x="22" y="68" width="2" height="2" fill="#f1fa8c" opacity="0.68"/><rect x="24" y="68" width="1" height="2" fill="#f8f8f2" opacity="0.62"/><rect x="6" y="70" width="6" height="2" fill="#8be9fd" opacity="0.68"/><rect x="12" y="70" width="1" height="2" fill="#ff79c6" opacity="0.68"/><rect x="14" y="70" width="2" height="2" fill="#bd93f9" opacity="0.68"/><rect x="16" y="70" width="1" height="2" fill="#f8f8f2" opacity="0.62"/><rect x="6" y="72" width="8" height="2" fill="#8be9fd" opacity="0.68"/><rect x="14" y="72" width="1" height="2" fill="#ff79c6" opacity="0.68"/><rect x="16" y="72" width="4" height="2" fill="#f1fa8c" opacity="0.68"/><rect x="21" y="72" width="1" height="2" fill="#f1fa8c" opacity="0.68"/><rect x="23" y="72" width="6" height="2" fill="#f1fa8c" opacity="0.68"/><rect x="30" y="72" width="4" height="2" fill="#f1fa8c" opacity="0.68"/><rect x="35" y="72" width="1" height="2" fill="#f1fa8c" opacity="0.68"/><rect x="37" y="72" width="10" height="2" fill="#f1fa8c" opacity="0.68"/><rect x="48" y="72" width="3" height="2" fill="#f1fa8c" opacity="0.68"/><rect x="52" y="72" width="2" height="2" fill="#f1fa8c" opacity="0.68"/><rect x="55" y="72" width="4" height="2" fill="#f1fa8c" opacity="0.68"/><rect x="60" y="72" width="8" height="2" fill="#f1fa8c" opacity="0.68"/><rect x="69" y="72" width="8" height="2" fill="#f1fa8c" opacity="0.68"/><rect x="4" y="74" width="1" height="2" fill="#f8f8f2" opacity="0.62"/><rect x="2" y="76" width="1" height="2" fill="#f8f8f2" opacity="0.62"/><rect x="2" y="78" width="14" height="2" fill="#8be9fd" opacity="0.68"/><rect x="16" y="78" width="1" height="2" fill="#ff79c6" opacity="0.68"/><rect x="18" y="78" width="4" height="2" fill="#bd93f9" opacity="0.68"/><rect x="0" y="80" width="1" height="2" fill="#f8f8f2" opacity="0.62"/><rect x="0" y="88" width="1" height="2" fill="#bd93f9" opacity="0.68"/><rect x="1" y="88" width="1" height="2" fill="#f8f8f2" opacity="0.62"/><rect x="3" y="88" width="1" height="2" fill="#f8f8f2" opacity="0.62"/><rect x="5" y="88" width="14" height="2" fill="#f8f8f2" opacity="0.62"/><rect x="20" y="88" width="9" height="2" fill="#f8f8f2" opacity="0.62"/><rect x="30" y="88" width="10" height="2" fill="#f8f8f2" opacity="0.62"/><rect x="41" y="88" width="5" height="2" fill="#f8f8f2" opacity="0.62"/><rect x="47" y="88" width="1" height="2" fill="#f8f8f2" opacity="0.62"/><rect x="49" y="88" width="4" height="2" fill="#f8f8f2" opacity="0.62"/><rect x="54" y="88" width="7" height="2" fill="#f8f8f2" opacity="0.62"/><rect x="62" y="88" width="1" height="2" fill="#f8f8f2" opacity="0.62"/><rect x="64" y="88" width="9" height="2" fill="#f8f8f2" opacity="0.62"/><rect x="74" y="88" width="6" height="2" fill="#f8f8f2" opacity="0.62"/><rect x="81" y="88" width="1" height="2" fill="#f8f8f2" opacity="0.62"/><rect x="83" y="88" width="2" height="2" fill="#f8f8f2" opacity="0.62"/><rect x="86" y="88" width="10" height="2" fill="#f8f8f2" opacity="0.62"/><rect x="97" y="88" width="9" height="2" fill="#f8f8f2" opacity="0.62"/><rect x="107" y="88" width="5" height="2" fill="#f8f8f2" opacity="0.62"/><rect x="7" y="92" width="9" height="2" fill="#f8f8f2" opacity="0.62"/><rect x="17" y="92" width="1" height="2" fill="#f8f8f2" opacity="0.62"/><rect x="19" y="92" width="8" height="2" fill="#f8f8f2" opacity="0.62"/><rect x="28" y="92" width="1" height="2" fill="#f8f8f2" opacity="0.62"/><rect x="30" y="92" width="7" height="2" fill="#f8f8f2" opacity="0.62"/><rect x="38" y="92" width="9" height="2" fill="#f8f8f2" opacity="0.62"/><rect x="48" y="92" width="2" height="2" fill="#f8f8f2" opacity="0.62"/><rect x="51" y="92" width="10" height="2" fill="#f8f8f2" opacity="0.62"/><rect x="7" y="94" width="3" height="2" fill="#f8f8f2" opacity="0.62"/><rect x="11" y="94" width="8" height="2" fill="#f8f8f2" opacity="0.62"/><rect x="20" y="94" width="12" height="2" fill="#f8f8f2" opacity="0.62"/><rect x="33" y="94" width="2" height="2" fill="#f8f8f2" opacity="0.62"/><rect x="36" y="94" width="4" height="2" fill="#f8f8f2" opacity="0.62"/><rect x="41" y="94" width="7" height="2" fill="#f8f8f2" opacity="0.62"/><rect x="4" y="98" width="1" height="2" fill="#bd93f9" opacity="0.68"/><rect x="6" y="98" width="9" height="2" fill="#f8f8f2" opacity="0.62"/><rect x="16" y="98" width="2" height="2" fill="#f8f8f2" opacity="0.62"/><rect x="19" y="98" width="6" height="2" fill="#f8f8f2" opacity="0.62"/><rect x="26" y="98" width="7" height="2" fill="#f8f8f2" opacity="0.62"/><rect x="34" y="98" width="12" height="2" fill="#f8f8f2" opacity="0.62"/><rect x="47" y="98" width="1" height="2" fill="#f8f8f2" opacity="0.62"/><rect x="49" y="98" width="6" height="2" fill="#f8f8f2" opacity="0.62"/><rect x="56" y="98" width="3" height="2" fill="#f8f8f2" opacity="0.62"/><rect x="60" y="98" width="8" height="2" fill="#f8f8f2" opacity="0.62"/><rect x="69" y="98" width="6" height="2" fill="#f8f8f2" opacity="0.62"/><rect x="76" y="98" width="1" height="2" fill="#f8f8f2" opacity="0.62"/><rect x="78" y="98" width="8" height="2" fill="#f8f8f2" opacity="0.62"/><rect x="7" y="100" width="6" height="2" fill="#f8f8f2" opacity="0.62"/><rect x="14" y="100" width="4" height="2" fill="#f8f8f2" opacity="0.62"/><rect x="19" y="100" width="6" height="2" fill="#f8f8f2" opacity="0.62"/><rect x="26" y="100" width="6" height="2" fill="#f8f8f2" opacity="0.62"/><rect x="33" y="100" width="3" height="2" fill="#f8f8f2" opacity="0.62"/><rect x="37" y="100" width="1" height="2" fill="#f8f8f2" opacity="0.62"/><rect x="39" y="100" width="10" height="2" fill="#f8f8f2" opacity="0.62"/><rect x="50" y="100" width="4" height="2" fill="#f8f8f2" opacity="0.62"/><rect x="55" y="100" width="8" height="2" fill="#f8f8f2" opacity="0.62"/><rect x="7" y="102" width="1" height="2" fill="#f8f8f2" opacity="0.62"/><rect x="9" y="102" width="6" height="2" fill="#f8f8f2" opacity="0.62"/><rect x="16" y="102" width="6" height="2" fill="#f8f8f2" opacity="0.62"/><rect x="23" y="102" width="4" height="2" fill="#f8f8f2" opacity="0.62"/><rect x="28" y="102" width="6" height="2" fill="#f8f8f2" opacity="0.62"/><rect x="35" y="102" width="3" height="2" fill="#f8f8f2" opacity="0.62"/><rect x="39" y="102" width="6" height="2" fill="#f8f8f2" opacity="0.62"/><rect x="46" y="102" width="1" height="2" fill="#f8f8f2" opacity="0.62"/><rect x="48" y="102" width="10" height="2" fill="#f8f8f2" opacity="0.62"/><rect x="59" y="102" width="4" height="2" fill="#f8f8f2" opacity="0.62"/><rect x="64" y="102" width="7" height="2" fill="#f8f8f2" opacity="0.62"/><rect x="7" y="104" width="3" height="2" fill="#f8f8f2" opacity="0.62"/><rect x="11" y="104" width="8" height="2" fill="#f8f8f2" opacity="0.62"/><rect x="20" y="104" width="10" height="2" fill="#f8f8f2" opacity="0.62"/><rect x="31" y="104" width="7" height="2" fill="#f8f8f2" opacity="0.62"/><rect x="39" y="104" width="1" height="2" fill="#f8f8f2" opacity="0.62"/><rect x="41" y="104" width="6" height="2" fill="#f8f8f2" opacity="0.62"/><rect x="48" y="104" width="6" height="2" fill="#f8f8f2" opacity="0.62"/><rect x="55" y="104" width="12" height="2" fill="#f8f8f2" opacity="0.62"/><rect x="68" y="104" width="9" height="2" fill="#f8f8f2" opacity="0.62"/><rect x="78" y="104" width="1" height="2" fill="#f8f8f2" opacity="0.62"/><rect x="80" y="104" width="4" height="2" fill="#f8f8f2" opacity="0.62"/><rect x="85" y="104" width="6" height="2" fill="#f8f8f2" opacity="0.62"/><rect x="92" y="104" width="7" height="2" fill="#f8f8f2" opacity="0.62"/><rect x="0" y="108" width="10" height="2" fill="#f8f8f2" opacity="0.62"/><rect x="11" y="108" width="6" height="2" fill="#f8f8f2" opacity="0.62"/><rect x="18" y="108" width="6" height="2" fill="#f8f8f2" opacity="0.62"/><rect x="0" y="110" width="11" height="2" fill="#f8f8f2" opacity="0.62"/><rect x="12" y="110" width="4" height="2" fill="#f8f8f2" opacity="0.62"/><rect x="0" y="112" width="4" height="2" fill="#f8f8f2" opacity="0.62"/><rect x="5" y="112" width="15" height="2" fill="#f8f8f2" opacity="0.62"/><rect x="20" y="112" width="10" height="2" fill="#ff5555" opacity="0.68"/><rect x="30" y="112" width="9" height="2" fill="#f8f8f2" opacity="0.62"/><rect x="0" y="116" width="9" height="2" fill="#f8f8f2" opacity="0.62"/><rect x="10" y="116" width="4" height="2" fill="#f8f8f2" opacity="0.62"/><rect x="0" y="118" width="1" height="2" fill="#f8f8f2" opacity="0.62"/><rect x="1" y="118" width="10" height="2" fill="#ff5555" opacity="0.68"/><rect x="11" y="118" width="2" height="2" fill="#f8f8f2" opacity="0.62"/><rect x="14" y="118" width="13" height="2" fill="#f8f8f2" opacity="0.62"/><rect x="28" y="118" width="9" height="2" fill="#f8f8f2" opacity="0.62"/><rect x="0" y="122" width="4" height="2" fill="#f8f8f2" opacity="0.62"/><rect x="5" y="122" width="8" height="2" fill="#f8f8f2" opacity="0.62"/><rect x="0" y="124" width="1" height="2" fill="#f8f8f2" opacity="0.62"/><rect x="2" y="126" width="1" height="2" fill="#8be9fd" opacity="0.68"/><rect x="3" y="126" width="7" height="2" fill="#8be9fd" opacity="0.68"/><rect x="10" y="126" width="1" height="2" fill="#8be9fd" opacity="0.68"/><rect x="11" y="126" width="1" height="2" fill="#ff79c6" opacity="0.68"/><rect x="13" y="126" width="1" height="2" fill="#bd93f9" opacity="0.68"/><rect x="14" y="126" width="1" height="2" fill="#f8f8f2" opacity="0.62"/><rect x="2" y="128" width="1" height="2" fill="#8be9fd" opacity="0.68"/><rect x="3" y="128" width="6" height="2" fill="#8be9fd" opacity="0.68"/><rect x="9" y="128" width="1" height="2" fill="#8be9fd" opacity="0.68"/><rect x="10" y="128" width="1" height="2" fill="#ff79c6" opacity="0.68"/><rect x="12" y="128" width="1" height="2" fill="#bd93f9" opacity="0.68"/><rect x="13" y="128" width="1" height="2" fill="#f8f8f2" opacity="0.62"/><rect x="2" y="130" width="1" height="2" fill="#8be9fd" opacity="0.68"/><rect x="3" y="130" width="7" height="2" fill="#8be9fd" opacity="0.68"/><rect x="10" y="130" width="1" height="2" fill="#8be9fd" opacity="0.68"/><rect x="11" y="130" width="1" height="2" fill="#ff79c6" opacity="0.68"/><rect x="13" y="130" width="1" height="2" fill="#f1fa8c" opacity="0.68"/><rect x="14" y="130" width="8" height="2" fill="#f1fa8c" opacity="0.68"/><rect x="23" y="130" width="8" height="2" fill="#f1fa8c" opacity="0.68"/><rect x="32" y="130" width="1" height="2" fill="#f1fa8c" opacity="0.68"/><rect x="34" y="130" width="5" height="2" fill="#f1fa8c" opacity="0.68"/><rect x="40" y="130" width="9" height="2" fill="#f1fa8c" opacity="0.68"/><rect x="49" y="130" width="1" height="2" fill="#f1fa8c" opacity="0.68"/><rect x="0" y="132" width="1" height="2" fill="#f8f8f2" opacity="0.62"/><rect x="0" y="136" width="4" height="2" fill="#f8f8f2" opacity="0.62"/><rect x="5" y="136" width="7" height="2" fill="#f8f8f2" opacity="0.62"/><rect x="13" y="136" width="3" height="2" fill="#bd93f9" opacity="0.68"/><rect x="17" y="136" width="7" height="2" fill="#f8f8f2" opacity="0.62"/><rect x="0" y="138" width="1" height="2" fill="#f8f8f2" opacity="0.62"/><rect x="2" y="140" width="1" height="2" fill="#8be9fd" opacity="0.68"/><rect x="3" y="140" width="9" height="2" fill="#8be9fd" opacity="0.68"/><rect x="12" y="140" width="1" height="2" fill="#8be9fd" opacity="0.68"/><rect x="13" y="140" width="1" height="2" fill="#ff79c6" opacity="0.68"/><rect x="15" y="140" width="1" height="2" fill="#bd93f9" opacity="0.68"/><rect x="16" y="140" width="1" height="2" fill="#f8f8f2" opacity="0.62"/><rect x="2" y="142" width="1" height="2" fill="#8be9fd" opacity="0.68"/><rect x="3" y="142" width="10" height="2" fill="#8be9fd" opacity="0.68"/><rect x="13" y="142" width="1" height="2" fill="#8be9fd" opacity="0.68"/><rect x="14" y="142" width="1" height="2" fill="#ff79c6" opacity="0.68"/><rect x="16" y="142" width="1" height="2" fill="#bd93f9" opacity="0.68"/><rect x="17" y="142" width="1" height="2" fill="#f8f8f2" opacity="0.62"/><rect x="2" y="144" width="1" height="2" fill="#8be9fd" opacity="0.68"/><rect x="3" y="144" width="7" height="2" fill="#8be9fd" opacity="0.68"/><rect x="10" y="144" width="1" height="2" fill="#8be9fd" opacity="0.68"/><rect x="11" y="144" width="1" height="2" fill="#ff79c6" opacity="0.68"/><rect x="13" y="144" width="1" height="2" fill="#bd93f9" opacity="0.68"/><rect x="14" y="144" width="1" height="2" fill="#f8f8f2" opacity="0.62"/><rect x="2" y="146" width="1" height="2" fill="#8be9fd" opacity="0.68"/><rect x="3" y="146" width="6" height="2" fill="#8be9fd" opacity="0.68"/><rect x="9" y="146" width="1" height="2" fill="#8be9fd" opacity="0.68"/><rect x="10" y="146" width="1" height="2" fill="#ff79c6" opacity="0.68"/><rect x="12" y="146" width="1" height="2" fill="#bd93f9" opacity="0.68"/><rect x="13" y="146" width="1" height="2" fill="#f8f8f2" opacity="0.62"/><rect x="2" y="148" width="1" height="2" fill="#8be9fd" opacity="0.68"/><rect x="3" y="148" width="7" height="2" fill="#8be9fd" opacity="0.68"/><rect x="10" y="148" width="1" height="2" fill="#8be9fd" opacity="0.68"/><rect x="11" y="148" width="1" height="2" fill="#ff79c6" opacity="0.68"/><rect x="13" y="148" width="1" height="2" fill="#f1fa8c" opacity="0.68"/><rect x="14" y="148" width="8" height="2" fill="#f1fa8c" opacity="0.68"/><rect x="23" y="148" width="8" height="2" fill="#f1fa8c" opacity="0.68"/><rect x="32" y="148" width="1" height="2" fill="#f1fa8c" opacity="0.68"/><rect x="34" y="148" width="5" height="2" fill="#f1fa8c" opacity="0.68"/><rect x="40" y="148" width="9" height="2" fill="#f1fa8c" opacity="0.68"/><rect x="49" y="148" width="1" height="2" fill="#f1fa8c" opacity="0.68"/><rect x="0" y="150" width="1" height="2" fill="#f8f8f2" opacity="0.62"/></g></svg>
<div class="abs" style="left:1540px;top:0;width:1px;height:800px;background:#1f2029"></div>
<div class="abs" style="left:1550px;top:0;width:4px;height:6px;background:#a8444b"></div>
<div class="abs" style="left:1540px;top:288px;width:14px;height:287px;background:#484954"></div>
<div class="abs" style="left:1541px;top:388px;width:13px;height:2px;background:#9b9b9d"></div>
</div>
<div id="panel">
<span class="t" style="left:20px;top:9.5px;font-size:11px;line-height:17px;color:#6272a4;letter-spacing:-0.300px;transform:scaleX(0.9029);transform-origin:0 50%;">PROBLEMS</span>
<div class="abs" style="left:83.7px;top:9px;width:18px;height:18px;border-radius:9px;background:#44475a;color:#f8f8f2;font-size:11px;line-height:18px;text-align:center;">2</div>
<span class="t" style="left:123.3px;top:9.5px;font-size:11px;line-height:17px;color:#f8f8f2;letter-spacing:-0.300px;transform:scaleX(0.9469);transform-origin:0 50%;">OUTPUT</span>
<div class="abs" style="left:122px;top:27.5px;width:45px;height:1.500px;background:#ff79c6"></div>
<span class="t" style="left:188.7px;top:9.5px;font-size:11px;line-height:17px;color:#6272a4;letter-spacing:-0.300px;transform:scaleX(0.9235);transform-origin:0 50%;">DEBUG CONSOLE</span>
<span class="t" style="left:298.3px;top:9.5px;font-size:11px;line-height:17px;color:#6272a4;letter-spacing:-0.300px;transform:scaleX(0.9529);transform-origin:0 50%;">TERMINAL</span>
<span class="t" style="left:373.7px;top:9.5px;font-size:11px;line-height:17px;color:#6272a4;letter-spacing:-0.300px;transform:scaleX(0.8659);transform-origin:0 50%;">PORTS</span>
<div class="abs" style="left:1242px;top:6px;width:170px;height:23px;background:#343746;border:1px solid #191a21;border-radius:2px"></div>
<span class="t" style="left:1251.4px;top:8.8px;font-size:13px;line-height:19px;color:#f8f8f2;letter-spacing:-0.064px;">Database Client</span>
<svg style="left:1392.5px;top:14px;" width="11" height="8" viewBox="0 0 11 8"><path d="M.6 1.200l4.900 4.900 4.900-4.900" fill="none" stroke="#f8f8f2" stroke-width="1.200"/></svg>
<svg style="left:1420px;top:12.5px;" width="15" height="12" viewBox="0 0 15 12"><path d="M0 1.200h14.500M0 4.100h14.500M0 7h9.500M0 9.900h8M10.300 7.500l3.800 3.800M14.100 7.500l-3.800 3.800" fill="none" stroke="#f8f8f2" stroke-width="1"/></svg>
<svg style="left:1447px;top:10.5px;" width="12" height="14" viewBox="0 0 12 14"><rect x=".6" y="6" width="10.800" height="7.400" rx="1" fill="none" stroke="#f8f8f2" stroke-width="1.200"/><path d="M3 6V3.800a3 3 0 0 1 6 0V6" fill="none" stroke="#f8f8f2" stroke-width="1.200"/></svg>
<svg style="left:1472px;top:16.5px;" width="14" height="3" viewBox="0 0 14 3"><circle cx="1.500" cy="1.500" r="1.100" fill="#f8f8f2"/><circle cx="7" cy="1.500" r="1.100" fill="#f8f8f2"/><circle cx="12.500" cy="1.500" r="1.100" fill="#f8f8f2"/></svg>
<svg style="left:1499.5px;top:14px;" width="11" height="6.5" viewBox="0 0 11 6.500"><path d="M.6 5.900l4.900-4.900 4.900 4.900" fill="none" stroke="#f8f8f2" stroke-width="1.200"/></svg>
<svg style="left:1526.5px;top:13px;" width="9" height="9" viewBox="0 0 9 9"><path d="M.5.5l8 8M8.500.5l-8 8" fill="none" stroke="#f8f8f2" stroke-width="1.200"/></svg>
<div class="abs" style="left:0;top:34px;width:1554px;height:83px;overflow:hidden;">
<div class="ol" style="top:-11px"><span style="color:#6796e6">2024-11-24 23:39:50</span> <span style="color:#f1fa8c">[DEBUG]</span> Creating PostgreSQL connection for 1730023120309/main_tree</div>
<div class="ol" style="top:8px"><span style="color:#6796e6">2024-11-24 23:39:50</span> <span style="color:#f1fa8c">[DEBUG]</span> Closing connection 1730023120309/main_tree</div>
<div class="ol" style="top:27px"><span style="color:#6796e6">2024-11-24 23:39:50</span> <span style="color:#f1fa8c">[ERROR]</span> <span style="color:#f44747">Error: connect ECONNREFUSED 127.0.0.1:5434</span></div>
<div class="ol" style="top:46px"><span style="color:#f44747">    at TCPConnectWrap.afterConnect </span>[<span style="color:#f44747">as oncomplete</span>]<span style="color:#f44747"> (node:net:1607:16)</span></div>
<div class="guide" style="left:20px;top:45px;height:19px"></div>
<div class="abs" style="left:0;top:0;width:1540px;height:4px;background:linear-gradient(rgba(0,0,0,.4),rgba(0,0,0,0))"></div>
<div class="abs" style="left:1540px;top:0;width:1px;height:83px;background:#1f2029"></div>
<div class="abs" style="left:1541px;top:1px;width:13px;height:1px;background:#7b7c82"></div>
</div>
</div>
<div id="sidebar">
<svg style="left:14.5px;top:9.5px;" width="14" height="17" viewBox="0 0 14 17"><ellipse cx="7" cy="3.300" rx="6.200" ry="2.600" fill="none" stroke="#f8f8f2" stroke-width="1.300"/><path d="M.8 3.300v10.400c0 1.400 2.800 2.600 6.200 2.600s6.200-1.200 6.200-2.600V3.300M.8 8.500c0 1.400 2.800 2.600 6.200 2.600s6.200-1.200 6.200-2.600" fill="none" stroke="#f8f8f2" stroke-width="1.300"/></svg>
<div class="abs" style="left:10px;top:33px;width:22px;height:1px;background:#ff79c6"></div>
<svg style="left:40.5px;top:10px;" width="13" height="15" viewBox="0 0 13 15"><path d="M8.500 2H1.200v12.300h10.600V6.500" fill="none" stroke="#6272a4" stroke-width="1.200"/><path d="M3.800 6.200h4.400M6 4v4.400M3.800 11h4.400M10 1.200l1.500-.7M11.500 3.500l1.200.3" fill="none" stroke="#6272a4" stroke-width="1.100"/></svg>
<svg style="left:65.5px;top:10.5px;" width="15" height="14" viewBox="0 0 15 14"><path d="M5.800 9.200H3.600L1.800 11V9.200H.7V.7h12.100v3.600M5.800 5.700h8.500v5.800h-1.400v1.800l-1.800-1.800H5.800z" fill="none" stroke="#6272a4" stroke-width="1.200" stroke-linejoin="round"/></svg>
<svg style="left:157px;top:9.6px;" width="16" height="16" viewBox="0 0 16 16"><path fill="#f8f8f2" d="M9.100 4.400L8.600 2H7.400l-.5 2.400-.7.300-2-1.300-.9.800 1.300 2-.2.700-2.400.5v1.200l2.400.5.300.8-1.300 2 .8.800 2-1.300.8.300.4 2.300h1.200l.5-2.400.8-.3 2 1.300.8-.8-1.300-2 .3-.8 2.300-.4V7.400l-2.400-.5-.3-.8 1.300-2-.8-.8-2 1.300-.7-.2zM9.400 1l.5 2.400L12 2.100l2 2-1.400 2.100 2.400.4v2.800l-2.400.5L14 12l-2 2-2.100-1.400-.5 2.400H6.600l-.5-2.400L4 13.900l-2-2 1.400-2.100L1 9.400V6.600l2.400-.5L2.100 4l2-2 2.100 1.400.4-2.400h2.800zm.6 7c0 1.100-.9 2-2 2s-2-.9-2-2 .9-2 2-2 2 .9 2 2zM8 9c.6 0 1-.4 1-1s-.4-1-1-1-1 .4-1 1 .4 1 1 1z"/></svg>
<svg style="left:183px;top:9.6px;" width="16" height="16" viewBox="0 0 16 16"><path fill="#f8f8f2" d="M13.507 12.324a7 7 0 0 0 .065-8.560A7 7 0 0 0 2 4.393V2H1v3.500l.5.5H5V5H2.811a6.008 6.008 0 1 1-.135 5.770l-.887.462a7 7 0 0 0 11.718 1.092zm-3.361-.970l.708-.707L8 7.792V4H7v4l.146.354 3 3z"/></svg>
<svg style="left:208.5px;top:9.6px;" width="16" height="16" viewBox="0 0 16 16"><path fill="#f8f8f2" d="M4.681 3H2V2h3.500l.5.5V6H5V4a5 5 0 1 0 4.530-.761l.302-.954A6 6 0 1 1 4.681 3z"/></svg>
<svg style="left:236.5px;top:11.5px;" width="13" height="12" viewBox="0 0 13 12"><rect x=".6" y="3.600" width="8.800" height="7.800" rx="1" fill="none" stroke="#f8f8f2" stroke-width="1.200"/><path d="M3.200 3.400V1.600c0-.6.400-1 1-1h7.200c.6 0 1 .4 1 1v5.800c0 .6-.4 1-1 1H9.600M2.600 7.500h4.800" fill="none" stroke="#f8f8f2" stroke-width="1.200"/></svg>
<svg style="left:262px;top:11px;" width="13" height="13" viewBox="0 0 13 13"><path d="M6.500 0v13M0 6.500h13" stroke="#f8f8f2" stroke-width="1.200"/></svg>
<svg style="left:290.5px;top:13px;" width="9" height="9" viewBox="0 0 9 9"><path d="M.4.400l8.200 8.200M8.600.4L.4 8.600" stroke="#f8f8f2" stroke-width="1.200"/></svg>
<div class="abs" style="left:0;top:189px;width:317px;height:22px;background:#313341"></div>
<div class="abs" style="left:48px;top:211px;width:1px;height:66px;background:#6b6c75"></div>
<svg style="left:15.2px;top:40.5px;" width="7" height="11" viewBox="0 0 7 11"><path d="M.8.700l4.800 4.800-4.800 4.800" fill="none" stroke="#e6e6e6" stroke-width="1.200"/></svg>
<svg style="left:33px;top:38px;" width="16" height="16" viewBox="0 0 16 16"><path fill="#5a8ded" d="M3.200.6C1.400 1 .3 2.600.3 4.800c0 2.300.6 4.700 1.500 6.200.7 1.200 1.700 1.500 2.600 1 .7-.4 1.200-1.100 1.700-2 .3 1.400.5 2.800.8 4.100.3 1.300 1.200 1.900 2.400 1.900 1.300 0 2-.8 2.100-2.200l.2-3.400c1 .5 2.300.5 3.300.1.600-.2 1.100-.6 1-1-.1-.3-.5-.3-1.100-.2-.4.100-.8 0-1-.200C15 7.600 15.800 5.800 15.700 4 15.600 1.800 14.200.4 12 .3c-.9 0-1.800.2-2.600.5C8.700.6 8 .500 7.300.500 6.500.500 5.800.7 5.200.9 4.600.6 3.900.500 3.200.6z"/><path d="M5.500 1.800c-.8 1.500-.9 3.400-.6 5.200.2 1.100.3 2-.1 2.900M10.500 1.500c.9 1.300 1 3 .7 4.700-.2 1.200-.1 2.300.4 3.300M8 3.500v3" stroke="#3f6ac0" stroke-width=".9" fill="none"/><circle cx="11" cy="4.200" r=".6" fill="#2a3f73"/></svg>
<span class="t" style="left:55.3px;top:36.5px;font-size:13px;line-height:19px;color:#f8f8f2;letter-spacing:0.023px;">admin</span>
<span class="t" style="left:97.4px;top:37.5px;font-size:12px;line-height:18px;color:#b9bac0;letter-spacing:-0.248px;">17.0 (Debian 17.0-1.pgdg120+1)</span>
<svg style="left:14px;top:65px;" width="11" height="7" viewBox="0 0 11 7"><path d="M.7.800l4.800 4.800L10.300.8" fill="none" stroke="#e6e6e6" stroke-width="1.200"/></svg>
<svg style="left:33px;top:60px;" width="16" height="16" viewBox="0 0 16 16"><path fill="#5a8ded" d="M3.200.6C1.400 1 .3 2.600.3 4.800c0 2.300.6 4.700 1.500 6.200.7 1.200 1.700 1.500 2.600 1 .7-.4 1.200-1.100 1.700-2 .3 1.400.5 2.800.8 4.100.3 1.300 1.200 1.900 2.400 1.900 1.300 0 2-.8 2.100-2.200l.2-3.400c1 .5 2.300.5 3.300.1.600-.2 1.100-.6 1-1-.1-.3-.5-.3-1.100-.2-.4.100-.8 0-1-.200C15 7.600 15.800 5.800 15.700 4 15.600 1.800 14.200.4 12 .3c-.9 0-1.800.2-2.600.5C8.700.6 8 .500 7.300.500 6.500.500 5.800.7 5.200.9 4.600.6 3.900.500 3.200.6z"/><path d="M5.500 1.800c-.8 1.500-.9 3.400-.6 5.200.2 1.100.3 2-.1 2.900M10.500 1.500c.9 1.300 1 3 .7 4.700-.2 1.200-.1 2.300.4 3.300M8 3.500v3" stroke="#3f6ac0" stroke-width=".9" fill="none"/><circle cx="11" cy="4.200" r=".6" fill="#2a3f73"/><circle cx="13.100" cy="13.500" r="2.800" fill="#0bd30b"/></svg>
<span class="t" style="left:55.3px;top:58.5px;font-size:13px;line-height:19px;color:#f8f8f2;letter-spacing:-0.059px;">main</span>
<span class="t" style="left:89.8px;top:59.5px;font-size:12px;line-height:18px;color:#b9bac0;letter-spacing:-0.245px;">17.0 (Debian 17.0-1.pgdg120+1)</span>
<svg style="left:22px;top:87px;" width="11" height="7" viewBox="0 0 11 7"><path d="M.7.800l4.800 4.800L10.300.8" fill="none" stroke="#e6e6e6" stroke-width="1.200"/></svg>
<svg style="left:43.2px;top:83px;" width="12" height="14" viewBox="0 0 12 14"><ellipse cx="6" cy="2.800" rx="5" ry="2.100" fill="none" stroke="#e6e6e6" stroke-width="1.200"/><path d="M1 2.800v8.400c0 1.200 2.200 2.100 5 2.100s5-.9 5-2.100V2.800" fill="none" stroke="#e6e6e6" stroke-width="1.200"/></svg>
<span class="t" style="left:63.3px;top:80.5px;font-size:13px;line-height:19px;color:#f8f8f2;letter-spacing:-0.159px;">main</span>
<svg style="left:30px;top:109px;" width="11" height="7" viewBox="0 0 11 7"><path d="M.7.800l4.800 4.800L10.300.8" fill="none" stroke="#e6e6e6" stroke-width="1.200"/></svg>
<svg style="left:49.5px;top:105px;" width="15" height="14" viewBox="0 0 15 14"><rect x=".8" y=".8" width="13.400" height="4.400" rx="1.200" fill="none" stroke="#3794ff" stroke-width="1.300"/><rect x=".8" y="8.800" width="4.400" height="4.400" rx="1" fill="none" stroke="#3794ff" stroke-width="1.300"/><rect x="9.800" y="8.800" width="4.400" height="4.400" rx="1" fill="none" stroke="#3794ff" stroke-width="1.300"/></svg>
<span class="t" style="left:71.5px;top:102.5px;font-size:13px;line-height:19px;color:#f8f8f2;letter-spacing:0.107px;">public</span>
<svg style="left:39.6px;top:128.5px;" width="7" height="11" viewBox="0 0 7 11"><path d="M.8.700l4.800 4.800-4.800 4.800" fill="none" stroke="#e6e6e6" stroke-width="1.200"/></svg>
<svg style="left:59px;top:127.5px;" width="12" height="13" viewBox="0 0 12 13"><ellipse cx="6" cy="2.600" rx="5.600" ry="2.400" fill="#f5c518"/><path fill="#f5c518" d="M.4 4.700c1 1.200 3.100 1.900 5.600 1.900s4.600-.7 5.600-1.900v1.600c0 1.300-2.500 2.400-5.600 2.400S.4 7.600.4 6.300zM.4 8.400c1 1.200 3.100 1.900 5.600 1.900s4.600-.7 5.600-1.900V10c0 1.300-2.500 2.400-5.600 2.400S.4 11.300.4 10z"/></svg>
<span class="t" style="left:79px;top:124.5px;font-size:13px;line-height:19px;color:#f8f8f2;letter-spacing:-0.125px;">Query</span>
<svg style="left:38px;top:153px;" width="11" height="7" viewBox="0 0 11 7"><path d="M.7.800l4.800 4.800L10.300.8" fill="none" stroke="#e6e6e6" stroke-width="1.200"/></svg>
<svg style="left:58.2px;top:150.5px;" width="13" height="11" viewBox="0 0 13 11"><path d="M0 1.200h13M0 5.500h13M0 9.800h13" stroke="#c99bfa" stroke-width="2"/></svg>
<span class="t" style="left:79px;top:146.5px;font-size:13px;line-height:19px;color:#f8f8f2;letter-spacing:-0.300px;transform:scaleX(0.9701);transform-origin:0 50%;">Tables</span>
<span class="t" style="left:120.2px;top:147.5px;font-size:12px;line-height:18px;color:#b9bac0;letter-spacing:-0.300px;transform:scaleX(0.9100);transform-origin:0 50%;">(3)</span>
<svg style="left:47.7px;top:172.5px;" width="7" height="11" viewBox="0 0 7 11"><path d="M.8.700l4.800 4.800-4.800 4.800" fill="none" stroke="#e6e6e6" stroke-width="1.200"/></svg>
<svg style="left:66.8px;top:170.8px;" width="13.7" height="13" viewBox="0 0 13 13"><rect x=".6" y=".6" width="11.800" height="11.800" rx="1.200" fill="none" stroke="#e6e6e6" stroke-width="1.200"/><path d="M6.500.6v11.800" stroke="#e6e6e6" stroke-width="1.200"/></svg>
<span class="t" style="left:87.4px;top:168.5px;font-size:13px;line-height:19px;color:#f8f8f2;letter-spacing:-0.217px;">alembic_version</span>
<svg style="left:46px;top:197px;" width="11" height="7" viewBox="0 0 11 7"><path d="M.7.800l4.800 4.800L10.300.8" fill="none" stroke="#e6e6e6" stroke-width="1.200"/></svg>
<svg style="left:66.8px;top:192.8px;" width="13.7" height="13" viewBox="0 0 13 13"><rect x=".6" y=".6" width="11.800" height="11.800" rx="1.200" fill="none" stroke="#e6e6e6" stroke-width="1.200"/><path d="M6.500.6v11.800" stroke="#e6e6e6" stroke-width="1.200"/></svg>
<span class="t" style="left:87.4px;top:190.5px;font-size:13px;line-height:19px;color:#f8f8f2;letter-spacing:0.256px;">product</span>
<svg style="left:248.5px;top:193px;" width="15" height="14.5" viewBox="0 0 14 14"><path d="M1 13l.8-3.400L10.600.8c.5-.5 1.300-.5 1.800 0l.8.800c.5.500.5 1.300 0 1.800L4.400 12.200z" fill="none" stroke="#f8f8f2" stroke-width="1.200" stroke-linejoin="round"/><path d="M9.300 2.100l2.600 2.600M2.500 9l8-8" stroke="#f8f8f2" stroke-width="1"/></svg>
<svg style="left:269.5px;top:194.5px;" width="13" height="11" viewBox="0 0 13 11"><path d="M0 1.200h13M0 5.500h13M0 9.800h13" stroke="#f8f8f2" stroke-width="1.900"/></svg>
<svg style="left:290px;top:193px;" width="12" height="14" viewBox="0 0 12 14"><path d="M.6.600h7L11.400 4.400v9H.6z" fill="none" stroke="#f8f8f2" stroke-width="1.200" stroke-linejoin="round"/><path d="M7.400.8v3.800h3.800" fill="none" stroke="#f8f8f2" stroke-width="1.200"/></svg>
<svg style="left:54px;top:219px;" width="11" height="7" viewBox="0 0 11 7"><path d="M.7.800l4.800 4.800L10.300.8" fill="none" stroke="#e6e6e6" stroke-width="1.200"/></svg>
<svg style="left:74px;top:215.5px;" width="14.5" height="12.5" viewBox="0 0 14 12"><rect x=".6" y=".6" width="12.800" height="10.800" rx=".8" fill="none" stroke="#e6e6e6" stroke-width="1.200"/><path d="M.6 3.600h12.800" stroke="#e6e6e6" stroke-width="1.200"/></svg>
<span class="t" style="left:95.2px;top:212.5px;font-size:13px;line-height:19px;color:#f8f8f2;letter-spacing:-0.249px;">Columns</span>
<span class="t" style="left:81px;top:234.5px;font-size:13px;line-height:19px;color:#f8f8f2;letter-spacing:-0.300px;transform:scaleX(0.9582);transform-origin:0 50%;">connect ECONNREFUSED 127.0.0.1:5...</span>
<svg style="left:56.5px;top:260.5px;" width="7" height="11" viewBox="0 0 7 11"><path d="M.8.700l4.800 4.800-4.800 4.800" fill="none" stroke="#e6e6e6" stroke-width="1.200"/></svg>
<svg style="left:73.5px;top:258.2px;" width="15.5" height="15.5" viewBox="0 0 16 16"><path fill="#e6e6e6" d="M11.351 1.091a4.528 4.528 0 0 1 3.440 3.160c.215.724.247 1.490.093 2.230a4.583 4.583 0 0 1-4.437 3.600c-.438 0-.874-.063-1.293-.190l-.8.938-.379.175H7v1.500l-.5.5H5v1.500l-.5.5h-3l-.5-.5v-2.307l.146-.353L6.120 6.870a4.464 4.464 0 0 1-.2-1.405 4.528 4.528 0 0 1 5.431-4.375zm1.318 7.200a3.568 3.568 0 0 0 1.239-2.005l.004.005A3.543 3.543 0 0 0 9.720 2.080a3.576 3.576 0 0 0-2.800 3.400c-.010.456.070.908.239 1.330l-.110.543L2 12.404v1.600h2v-1.500l.5-.5H6v-1.500l.5-.5h1.245l.876-1.016.561-.140a3.470 3.470 0 0 0 1.269.238 3.568 3.568 0 0 0 2.218-.795zm-.838-2.732a1 1 0 1 0-1.662-1.110 1 1 0 0 0 1.662 1.110z"/></svg>
<span class="t" style="left:95.2px;top:256.5px;font-size:13px;line-height:19px;color:#f8f8f2;letter-spacing:-0.175px;">Index</span>
<svg style="left:47.7px;top:282.5px;" width="7" height="11" viewBox="0 0 7 11"><path d="M.8.700l4.800 4.800-4.800 4.800" fill="none" stroke="#e6e6e6" stroke-width="1.200"/></svg>
<svg style="left:66.8px;top:280.8px;" width="13.7" height="13" viewBox="0 0 13 13"><rect x=".6" y=".6" width="11.800" height="11.800" rx="1.200" fill="none" stroke="#e6e6e6" stroke-width="1.200"/><path d="M6.500.6v11.800" stroke="#e6e6e6" stroke-width="1.200"/></svg>
<span class="t" style="left:87.4px;top:278.5px;font-size:13px;line-height:19px;color:#f8f8f2;letter-spacing:-0.236px;">product_user_likes</span>
<span class="t" style="left:201.3px;top:279.5px;font-size:12px;line-height:18px;color:#b9bac0;">6</span>
<svg style="left:39.9px;top:304.5px;" width="7" height="11" viewBox="0 0 7 11"><path d="M.8.700l4.800 4.800-4.800 4.800" fill="none" stroke="#e6e6e6" stroke-width="1.200"/></svg>
<svg style="left:58.4px;top:304.5px;" width="13" height="11" viewBox="0 0 13 11"><path d="M0 1.200h13M0 5.500h13M0 9.800h13" stroke="#7fe3f5" stroke-width="2"/></svg>
<span class="t" style="left:79.3px;top:300.5px;font-size:13px;line-height:19px;color:#f8f8f2;letter-spacing:-0.300px;transform:scaleX(0.9897);transform-origin:0 50%;">Views</span>
<svg style="left:39.9px;top:326.5px;" width="7" height="11" viewBox="0 0 7 11"><path d="M.8.700l4.800 4.800-4.800 4.800" fill="none" stroke="#e6e6e6" stroke-width="1.200"/></svg>
<svg style="left:58.4px;top:325px;" width="13" height="14" viewBox="0 0 13 14"><path d="M6.500.8l5.700 2.900v6.600L6.500 13.200.8 10.300V3.700zM.8 3.700l5.700 2.900 5.700-2.900M6.500 6.600v6.600" fill="none" stroke="#b180d7" stroke-width="1.300" stroke-linejoin="round"/></svg>
<span class="t" style="left:79.3px;top:322.5px;font-size:13px;line-height:19px;color:#f8f8f2;letter-spacing:-0.208px;">Functions</span>
<svg style="left:39.9px;top:348.5px;" width="7" height="11" viewBox="0 0 7 11"><path d="M.8.700l4.800 4.800-4.800 4.800" fill="none" stroke="#e6e6e6" stroke-width="1.200"/></svg>
<svg style="left:57.8px;top:346.5px;" width="15" height="15" viewBox="0 0 16 16"><path fill="#c5c5c5" d="M9.100 4.400L8.600 2H7.400l-.5 2.400-.7.300-2-1.300-.9.800 1.300 2-.2.700-2.400.5v1.200l2.400.5.300.8-1.300 2 .8.800 2-1.300.8.300.4 2.300h1.200l.5-2.400.8-.3 2 1.300.8-.8-1.300-2 .3-.8 2.300-.4V7.400l-2.400-.5-.3-.8 1.300-2-.8-.8-2 1.300-.7-.2zM9.400 1l.5 2.400L12 2.100l2 2-1.400 2.100 2.400.4v2.800l-2.400.5L14 12l-2 2-2.100-1.400-.5 2.400H6.600l-.5-2.400L4 13.900l-2-2 1.400-2.100L1 9.400V6.600l2.400-.5L2.100 4l2-2 2.100 1.400.4-2.400h2.800zm.6 7c0 1.100-.9 2-2 2s-2-.9-2-2 .9-2 2-2 2 .9 2 2zM8 9c.6 0 1-.4 1-1s-.4-1-1-1-1 .4-1 1 .4 1 1 1z"/></svg>
<span class="t" style="left:79.3px;top:344.5px;font-size:13px;line-height:19px;color:#f8f8f2;letter-spacing:-0.300px;transform:scaleX(0.9988);transform-origin:0 50%;">Procedures</span>
<svg style="left:23.6px;top:370.5px;" width="7" height="11" viewBox="0 0 7 11"><path d="M.8.700l4.800 4.800-4.800 4.800" fill="none" stroke="#e6e6e6" stroke-width="1.200"/></svg>
<svg style="left:43.2px;top:369px;" width="12" height="14" viewBox="0 0 12 14"><ellipse cx="6" cy="2.800" rx="5" ry="2.100" fill="none" stroke="#e6e6e6" stroke-width="1.200"/><path d="M1 2.800v8.400c0 1.200 2.200 2.100 5 2.100s5-.9 5-2.100V2.800" fill="none" stroke="#e6e6e6" stroke-width="1.200"/></svg>
<span class="t" style="left:63.3px;top:366.5px;font-size:13px;line-height:19px;color:#f8f8f2;letter-spacing:-0.037px;">postgres</span>
<svg style="left:23.6px;top:392.5px;" width="7" height="11" viewBox="0 0 7 11"><path d="M.8.700l4.800 4.800-4.800 4.800" fill="none" stroke="#e6e6e6" stroke-width="1.200"/></svg>
<svg style="left:43.2px;top:391px;" width="12" height="14" viewBox="0 0 12 14"><ellipse cx="6" cy="2.800" rx="5" ry="2.100" fill="none" stroke="#e6e6e6" stroke-width="1.200"/><path d="M1 2.800v8.400c0 1.200 2.200 2.100 5 2.100s5-.9 5-2.100V2.800" fill="none" stroke="#e6e6e6" stroke-width="1.200"/></svg>
<span class="t" style="left:63.3px;top:388.5px;font-size:13px;line-height:19px;color:#f8f8f2;letter-spacing:0.566px;">root</span>
</div>
<div id="status">
<div class="abs" style="left:0;top:0;width:34px;height:22px;background:#bd93f9"></div>
<svg style="left:12px;top:5px;" width="11" height="12" viewBox="0 0 11 12"><path d="M.8 2.200l3.600 3.600L.8 9.400M10.200.6L6.600 4.200l3.600 3.600" fill="none" stroke="#5a4a78" stroke-width="1.100"/></svg>
<svg style="left:40px;top:4px;" width="14" height="14" viewBox="0 0 24 24"><path fill="#f8f8f2" d="M21.007 8.222A3.738 3.738 0 0 0 15.045 5.200a3.737 3.737 0 0 0 1.156 6.583 2.988 2.988 0 0 1-2.668 1.670h-2.990a4.456 4.456 0 0 0-2.989 1.165V7.400a3.737 3.737 0 1 0-1.494 0v9.117a3.776 3.776 0 1 0 1.816.099 2.990 2.990 0 0 1 2.668-1.667h2.990a4.484 4.484 0 0 0 4.223-3.039 3.736 3.736 0 0 0 3.250-3.687zM4.565 3.738a2.242 2.242 0 1 1 4.484 0 2.242 2.242 0 0 1-4.484 0zm4.484 16.441a2.242 2.242 0 1 1-4.484 0 2.242 2.242 0 0 1 4.484 0zm8.221-9.715a2.242 2.242 0 1 1 0-4.485 2.242 2.242 0 0 1 0 4.485z"/></svg>
<span class="t" style="left:57.3px;top:3.2px;font-size:12px;line-height:18px;color:#f8f8f2;letter-spacing:0.005px;">main*</span>
<svg style="left:94px;top:3.5px;" width="15.5" height="15.5" viewBox="0 0 16 16"><path fill="#f8f8f2" d="M2.006 8.267L.78 9.500 0 8.730l2.090-2.070.76.010 2.090 2.120-.76.760-1.167-1.180a5 5 0 0 0 9.400 1.983l.813.597a6 6 0 0 1-11.220-2.683zm10.990-.466L11.760 6.550l-.76.760 2.090 2.110.76.010 2.090-2.070-.75-.76-1.194 1.180a6 6 0 0 0-11.110-2.920l.81.594a5 5 0 0 1 9.300 2.346z"/></svg>
<svg style="left:123px;top:4.7px;" width="13" height="13" viewBox="0 0 13 13"><circle cx="6.500" cy="6.500" r="5.800" fill="none" stroke="#f8f8f2" stroke-width="1.100"/><path d="M4.200 4.200l4.600 4.600M8.800 4.200L4.200 8.800" stroke="#f8f8f2" stroke-width="1.100"/></svg>
<span class="t" style="left:139.7px;top:3.2px;font-size:12px;line-height:18px;color:#f8f8f2;">2</span>
<svg style="left:150.5px;top:5px;" width="13" height="12" viewBox="0 0 13 12"><path d="M6.500 1L12.300 11.300H.7z" fill="none" stroke="#f8f8f2" stroke-width="1.100" stroke-linejoin="round"/><path d="M6.500 4.500v3.700M6.500 9.200v1" stroke="#f8f8f2" stroke-width="1.100"/></svg>
<span class="t" style="left:167px;top:3.2px;font-size:12px;line-height:18px;color:#f8f8f2;">0</span>
<svg style="left:190.5px;top:4.5px;" width="12" height="13" viewBox="0 0 12 13"><path d="M6 5.500L3.200 12.500M6 5.500l2.800 7M4.300 10h3.400" fill="none" stroke="#f8f8f2" stroke-width="1.100"/><circle cx="6" cy="4.400" r="1.200" fill="#f8f8f2"/><path d="M3.400 1.500c-1.200 1.600-1.200 4 0 5.600M8.600 1.500c1.200 1.600 1.200 4 0 5.600M1.500.5c-1.700 2.400-1.700 5.400 0 7.800M10.500.5c1.700 2.400 1.700 5.400 0 7.800" fill="none" stroke="#f8f8f2" stroke-width="1"/></svg>
<span class="t" style="left:206.3px;top:3.2px;font-size:12px;line-height:18px;color:#f8f8f2;">0</span>
<svg style="left:230.3px;top:4.5px;" width="11" height="13" viewBox="0 0 11 13"><rect x="0" y="0" width="11" height="3.600" rx=".8" fill="#f8f8f2"/><rect x="0" y="4.700" width="11" height="3.600" rx=".8" fill="#f8f8f2"/><rect x="0" y="9.400" width="11" height="3.600" rx=".8" fill="#f8f8f2"/><path d="M1.500 1.800h2.500M1.500 6.500h2.500M1.500 11.200h2.500" stroke="#191a21" stroke-width="1"/></svg>
<span class="t" style="left:246.3px;top:3.2px;font-size:12px;line-height:18px;color:#f8f8f2;letter-spacing:-0.103px;">main</span>
<svg style="left:278.5px;top:4.5px;" width="9" height="13" viewBox="0 0 9 13"><ellipse cx="4.500" cy="2.300" rx="3.900" ry="1.700" fill="none" stroke="#f8f8f2" stroke-width="1.100"/><path d="M.6 2.300v8.400c0 .9 1.700 1.700 3.900 1.700s3.900-.8 3.900-1.700V2.300" fill="none" stroke="#f8f8f2" stroke-width="1.100"/></svg>
<span class="t" style="left:293px;top:3.2px;font-size:12px;line-height:18px;color:#f8f8f2;letter-spacing:-0.103px;">main</span>
<span class="t" style="left:1424px;top:3.2px;font-size:12px;line-height:18px;color:#f8f8f2;letter-spacing:-0.300px;transform:scaleX(0.9966);transform-origin:0 50%;">Ln 58, Col 1</span>
<span class="t" style="left:1501px;top:3.2px;font-size:12px;line-height:18px;color:#f8f8f2;letter-spacing:-0.300px;transform:scaleX(0.9673);transform-origin:0 50%;">Spaces: 2</span>
<span class="t" style="left:1566.3px;top:3.2px;font-size:12px;line-height:18px;color:#f8f8f2;letter-spacing:-0.300px;transform:scaleX(0.9666);transform-origin:0 50%;">UTF-8</span>
<span class="t" style="left:1613.7px;top:3.2px;font-size:12px;line-height:18px;color:#f8f8f2;letter-spacing:-0.300px;transform:scaleX(0.8707);transform-origin:0 50%;">CRLF</span>
<span class="t" style="left:1655.8px;top:2.2px;font-size:12px;line-height:18px;color:#f8f8f2;letter-spacing:2.984px;">{}</span>
<svg style="left:1660.8px;top:11.5px;" width="7" height="7" viewBox="0 0 7 7"><circle cx="3.500" cy="3.500" r="3.500" fill="#191a21"/><circle cx="3.500" cy="3.500" r="2.500" fill="none" stroke="#f8f8f2" stroke-width=".9"/><path d="M2.400 2.400l2.200 2.200M4.600 2.400L2.400 4.600" stroke="#f8f8f2" stroke-width=".8"/></svg>
<span class="t" style="left:1674.5px;top:3.2px;font-size:12px;line-height:18px;color:#f8f8f2;letter-spacing:-0.300px;transform:scaleX(0.9002);transform-origin:0 50%;">JSON</span>
<svg style="left:1717.5px;top:4.5px;" width="12" height="13" viewBox="0 0 12 13"><circle cx="6" cy="5.200" r="1.500" fill="#f8f8f2"/><path d="M6 6.500v6" stroke="#f8f8f2" stroke-width="1.300"/><path d="M3.600 8.300a3.700 3.700 0 1 1 4.800 0M2.200 10.200a5.500 5.500 0 1 1 7.600 0" fill="none" stroke="#f8f8f2" stroke-width="1.100"/></svg>
<span class="t" style="left:1734px;top:3.2px;font-size:12px;line-height:18px;color:#f8f8f2;letter-spacing:-0.300px;transform:scaleX(0.9935);transform-origin:0 50%;">Go Live</span>
<svg style="left:1788.5px;top:4.5px;" width="15" height="13.6" viewBox="0 0 15 13.600"><path fill="#f8f8f2" fill-rule="evenodd" d="M7.500 1.600C6.600.500 5.300 0 4.300.200 2.800.400 2 1.600 2 3.200c0 .8.100 1.500.4 2L.6 7.200C.2 7.700 0 8.200 0 8.800v1.600c0 .5.200.9.600 1.200 1.800 1.300 4.300 2 6.900 2s5.100-.7 6.900-2c.4-.3.600-.7.600-1.200V8.800c0-.6-.2-1.100-.6-1.600L12.600 5.200c.3-.5.400-1.200.4-2 0-1.600-.8-2.800-2.300-3-1-.2-2.300.3-3.200 1.400zM5.200 1.700c-1 0-1.700.8-1.700 2s.7 2 1.700 2 1.700-.8 1.700-2-.7-2-1.700-2zM9.800 1.700c-1 0-1.700.8-1.700 2s.7 2 1.700 2 1.700-.8 1.700-2-.7-2-1.700-2zM2.900 7.300h9.200v3.500c-1.300.7-2.900 1.100-4.600 1.100s-3.300-.4-4.600-1.100z"/><path d="M.5 1.200l14 11.500" stroke="#191a21" stroke-width="3.200"/><path d="M.8 1.400l13.400 11" stroke="#f8f8f2" stroke-width="1.300"/></svg>
<svg style="left:1819px;top:6.5px;" width="13" height="9" viewBox="0 0 13 9"><path d="M.5 5l2 2.800L7.500.8M5.500 6.500l1 1.300L12.500.8" fill="none" stroke="#f8f8f2" stroke-width="1.100"/></svg>
<span class="t" style="left:1836.6px;top:3.2px;font-size:12px;line-height:18px;color:#f8f8f2;letter-spacing:-0.011px;">Prettier</span>
<svg style="left:1893px;top:4px;" width="13" height="14" viewBox="0 0 13 14"><path d="M2.500 10.500V6.200C2.500 3.800 4 2.200 6 2.200M9.500 7v3.500M.8 10.800h10.400M4.500 12.500c.3.700.8 1 1.500 1s1.200-.3 1.500-1" fill="none" stroke="#f8f8f2" stroke-width="1.200"/><circle cx="9.800" cy="3.200" r="2.600" fill="#f8f8f2"/></svg>
</div>
</body></html>
